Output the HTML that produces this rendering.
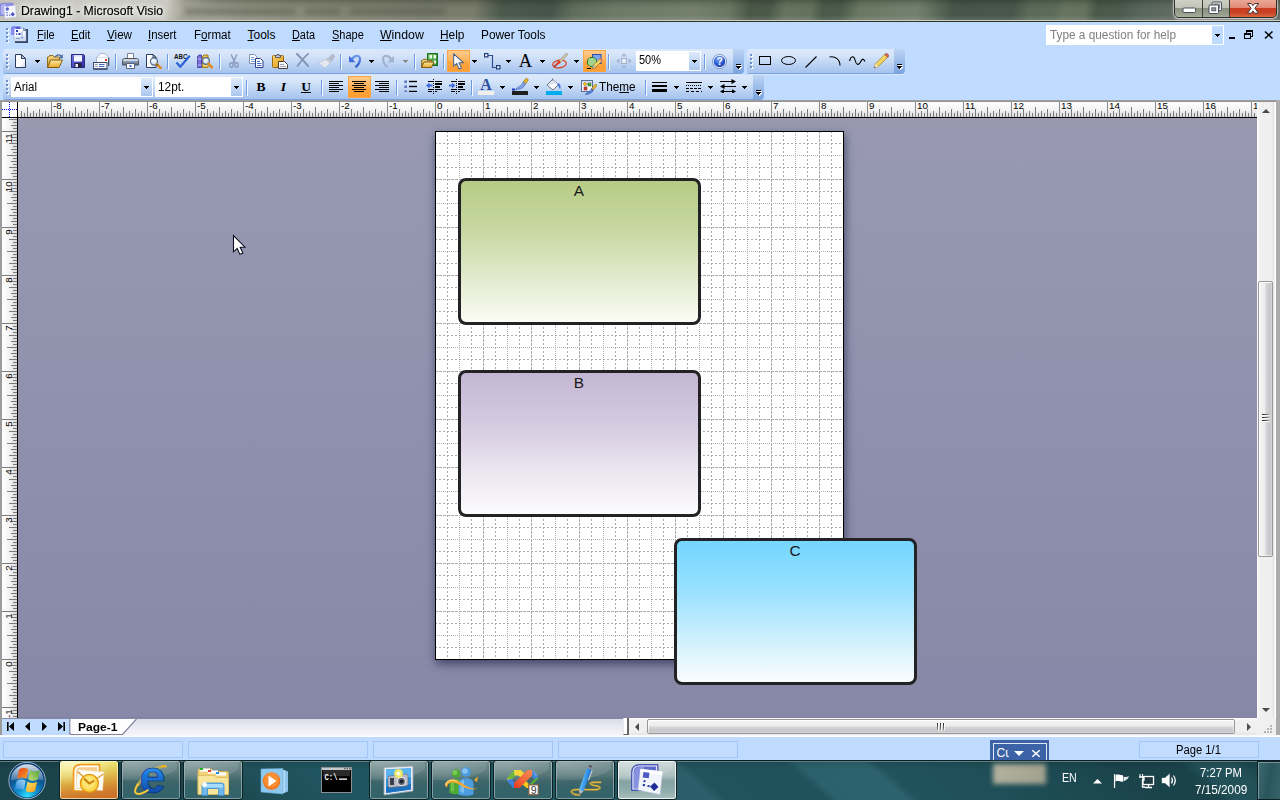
<!DOCTYPE html>
<html><head><meta charset="utf-8"><title>Drawing1 - Microsoft Visio</title>
<style>
html,body{margin:0;padding:0;width:1280px;height:800px;overflow:hidden;background:#bfdbff;font-family:"Liberation Sans",sans-serif;font-size:12px;color:#000}
div,span,svg{position:absolute;box-sizing:border-box}
.t{white-space:nowrap;line-height:1}
#title{left:0;top:0;width:1280px;height:22px;background:#4a5a4c;overflow:hidden}
#menubar{left:0;top:22px;width:1280px;height:26px;background:#bfdbff}
.tb{height:25px;border-radius:3px 0 0 3px;background:linear-gradient(#dbe9fb 0%,#cfe0f8 35%,#b9d2f3 70%,#a9c6ee 100%);border-bottom:1px solid #86a9dc}
.cap{height:25px;width:10px;border-radius:0 4px 4px 0;background:linear-gradient(#b3ccef,#7fa5dd)}
.sep{width:1px;height:17px;background:#7f9fd0;box-shadow:1px 0 0 #eef5ff}
.hl{background:linear-gradient(#fdc27a,#fba443 50%,#fb9a2c);border:1px solid #f29536}
.dd{width:0;height:0;border-left:3px solid transparent;border-right:3px solid transparent;border-top:3px solid #000}
#canvas{left:18px;top:118px;width:1239px;height:600px;background:linear-gradient(#9899b1,#8788a7);overflow:hidden}
.shape{border:3px solid #232325;border-radius:8px}
.shape .t{left:-0.5px;width:100%;text-align:center;top:1.5px;font-size:15.4px;color:#1a1a1a}
#taskbar{left:0;top:760px;width:1280px;height:40px;background:#1f484e;overflow:hidden}
.tbtn{top:1px;width:58px;height:39px;border-radius:3px;border:1px solid #0f2a2e;box-shadow:inset 0 0 0 1px rgba(255,255,255,.32);background:linear-gradient(rgba(255,255,255,.30),rgba(255,255,255,.12) 45%,rgba(255,255,255,.05) 50%,rgba(255,255,255,.10))}
.cell{top:741px;height:17px;border:1px solid #a2c6f6;background:#c2dcff}
</style></head><body>

<div id="title">
<div style="left:0;top:0;width:1280px;height:22px;background:linear-gradient(100deg,#c2c2ba 0,#cbcbc3 40px,#c9c9c1 165px,#a5a597 182px,#8f9180 245px,#828471 330px,#777a6a 420px,#7a7c6a 468px,#4b5a4c 495px,#44544a 545px,#5e6c5a 565px,#6c7a66 605px,#74806c 685px,#6a7762 720px,#4a5848 740px,#4c5a4a 760px,#66745f 775px,#64725d 800px,#4a5a4a 812px,#4c5c4c 830px,#6a7862 848px,#74806e 905px,#5a6a58 925px,#46564a 940px,#47574b 1000px,#5a6a58 1015px,#5c6c5a 1040px,#67755f 1050px,#65735e 1070px,#495949 1082px,#4b5b4d 1105px,#57665b 1125px,#686e63 1175px,#5a6258 1280px)"></div>
<div style="left:170px;top:0;width:1110px;height:22px;background:linear-gradient(rgba(20,30,20,.28) 0,rgba(20,30,20,.10) 4px,rgba(0,0,0,0) 8px,rgba(0,0,0,0) 15px,rgba(255,255,255,.10) 19px);-webkit-mask-image:linear-gradient(90deg,transparent,#000 50px);mask-image:linear-gradient(90deg,transparent,#000 50px)"></div>
<div style="left:185px;top:8px;width:110px;height:7px;background:#4e5246;filter:blur(2.500px);opacity:.4"></div>
<div style="left:305px;top:8px;width:35px;height:7px;background:#4e5246;filter:blur(2.500px);opacity:.36"></div>
<div style="left:350px;top:8px;width:95px;height:7px;background:#4e5246;filter:blur(2.500px);opacity:.36"></div>
<div style="left:0;top:20px;width:1280px;height:1px;background:#c9cdc4"></div>
<div style="left:0;top:21px;width:1280px;height:1px;background:#2c332d"></div>

<div class="t" id="t1" style="left:21px;top:4px;font-size:13px;color:#000;transform-origin:0 0;transform:scaleX(0.9419);-webkit-text-stroke:.15px #000;text-shadow:0 0 5px #fff,0 0 8px #fff,0 0 10px rgba(255,255,255,.8);">Drawing1 - Microsoft Visio</div>
<svg style="left:0px;top:2px" width="17" height="17" viewBox="0 0 17 17" ><path d="M0 4q0-2.800 3-2.800h10v12.300h-13z" fill="#8a8ee6" stroke="#7478d8" stroke-width=".6"/>
<path d="M.8 4.500q0-2.300 2.500-2.300h2.700v10.300h-5.200z" fill="#b8bbf2" opacity=".85"/>
<path d="M4 4.800l11.300-1.300 1 11.500-11.300 1.300z" fill="#f6f7fd" stroke="#c9cce8" stroke-width=".5"/>
<circle cx="7.300" cy="7" r="1.700" fill="#5a60cc"/><rect x="6.300" y="10" width="1.300" height="1.300" fill="#5a60cc"/><rect x="6.500" y="12.500" width="1.300" height="1.300" fill="#5a60cc"/><rect x="9" y="12.500" width="1.300" height="1.300" fill="#5a60cc"/>
<path d="M12.700 10l2.100 2.300-2.100 2.300-2.100-2.300z" fill="#4a50c4"/></svg><div style="left:1174px;top:-4px;width:103px;height:22px;border-radius:5px;border:1px solid #2b302a;box-shadow:0 0 0 1px rgba(255,255,255,.45),0 1px 3px 1px rgba(255,255,255,.28);overflow:hidden">
<div style="left:0;top:0;width:27px;height:21px;background:linear-gradient(#d4d5cc 0,#c2c4b8 52%,#8e9383 54%,#9ea392 85%,#b6baaa 100%)"></div>
<div style="left:27px;top:0;width:1px;height:21px;background:#3a3f38"></div>
<div style="left:28px;top:0;width:1px;height:21px;background:#d8dad0"></div>
<div style="left:28px;top:0;width:26px;height:21px;background:linear-gradient(#d0d1c8 0,#bec0b4 52%,#8a8f80 54%,#9a9f8e 85%,#b2b6a6 100%)"></div>
<div style="left:54px;top:0;width:1px;height:21px;background:#3a3f38"></div>
<div style="left:55px;top:0;width:47px;height:21px;background:linear-gradient(#f0b2a2 0,#e08c78 50%,#cb3d20 54%,#c84224 75%,#de7048 100%)"></div>
</div><svg style="left:1182px;top:7px" width="15" height="7" viewBox="0 0 15 7" ><rect x="1" y="1" width="12.500" height="4.500" rx="1" fill="#fff" stroke="#4a4e5e" stroke-width="1"/></svg><svg style="left:1208px;top:1px" width="15" height="14" viewBox="0 0 15 14" ><rect x="4" y="1" width="9.500" height="8.500" rx="1" fill="#e8e8e4" stroke="#4a4e5e"/><rect x="6" y="3" width="5.500" height="4.500" fill="#a9ab9f" stroke="#4a4e5e" stroke-width=".6"/><rect x="1" y="4" width="9.500" height="8.500" rx="1" fill="#fff" stroke="#4a4e5e"/><rect x="3.800" y="6.800" width="4" height="3" fill="#9a9c90" stroke="#4a4e5e" stroke-width=".8"/></svg><svg style="left:1246px;top:2px" width="14" height="13" viewBox="0 0 14 13" ><path d="M1.500 1.500h3.800l1.700 2.200 1.700-2.200h3.800l-3.600 4.800 3.600 4.900h-3.800l-1.700-2.300-1.700 2.300h-3.800l3.600-4.900z" fill="#fff" stroke="#4a3436" stroke-width="1" stroke-linejoin="round"/></svg>
</div>
<div id="menubar">
<div class="t" id="t2" style="left:37px;top:7px;font-size:12px;color:#000;transform-origin:0 0;transform:scaleX(0.9143);"><u>F</u>ile</div>
<div class="t" id="t3" style="left:71.1px;top:7px;font-size:12px;color:#000;transform-origin:0 0;transform:scaleX(0.9419);"><u>E</u>dit</div>
<div class="t" id="t4" style="left:107px;top:7px;font-size:12px;color:#000;transform-origin:0 0;transform:scaleX(0.9685);"><u>V</u>iew</div>
<div class="t" id="t5" style="left:148.1px;top:7px;font-size:12px;color:#000;transform-origin:0 0;transform:scaleX(0.9490);"><u>I</u>nsert</div>
<div class="t" id="t6" style="left:193.7px;top:7px;font-size:12px;color:#000;transform-origin:0 0;transform:scaleX(0.9676);">F<u>o</u>rmat</div>
<div class="t" id="t7" style="left:247.5px;top:7px;font-size:12px;color:#000;"><u>T</u>ools</div>
<div class="t" id="t8" style="left:292px;top:7px;font-size:12px;color:#000;transform-origin:0 0;transform:scaleX(0.9070);"><u>D</u>ata</div>
<div class="t" id="t9" style="left:332px;top:7px;font-size:12px;color:#000;transform-origin:0 0;transform:scaleX(0.9159);"><u>S</u>hape</div>
<div class="t" id="t10" style="left:380px;top:7px;font-size:12px;color:#000;transform-origin:0 0;transform:scaleX(1.0261);"><u>W</u>indow</div>
<div class="t" id="t11" style="left:440px;top:7px;font-size:12px;color:#000;transform-origin:0 0;transform:scaleX(0.9924);"><u>H</u>elp</div>
<div class="t" id="t12" style="left:481.2px;top:7px;font-size:12px;color:#000;transform-origin:0 0;transform:scaleX(0.9899);">Power Tools</div>
</div>
<div style="left:7px;top:29px;width:2px;height:2px;background:#fff"></div><div style="left:6px;top:28px;width:2px;height:2px;background:#6c8ecb"></div><div style="left:7px;top:33px;width:2px;height:2px;background:#fff"></div><div style="left:6px;top:32px;width:2px;height:2px;background:#6c8ecb"></div><div style="left:7px;top:37px;width:2px;height:2px;background:#fff"></div><div style="left:6px;top:36px;width:2px;height:2px;background:#6c8ecb"></div><div style="left:7px;top:41px;width:2px;height:2px;background:#fff"></div><div style="left:6px;top:40px;width:2px;height:2px;background:#6c8ecb"></div>
<svg style="left:11px;top:26px" width="17" height="17" viewBox="0 0 17 17" ><rect x="4" y="3" width="13" height="14" fill="#34486a"/>
<path d="M3 2h9.500l2.500 2.500v10.500h-12z" fill="#f4f7fd" stroke="#8aa0c8" stroke-width=".6"/>
<path d="M12.500 2v2.500h2.500z" fill="#c6d2ea" stroke="#4a5e86" stroke-width=".6"/>
<rect x="4" y="10.500" width="10" height="4" fill="#cfdcf4"/>
<path d="M0 2q0-1.500 2-1.500h7.500v8.500h-9.500z" fill="#5a5cd0"/><path d="M0 2q0-1.500 2-1.500h3v8.500h-5z" fill="#8a8cec"/>
<path d="M3.500 3h6.500v7.500h-6.500z" fill="#fbfcff"/>
<rect x="5" y="4" width="2" height="2" fill="#2a3cb8"/><rect x="5" y="7.500" width="1.300" height="1.300" fill="#2a3cb8"/><rect x="7.500" y="7" width="2" height="2" fill="#2a3cb8"/>
<path d="M10.500 5.500v5.500l-1.500 0 2 2 2-2h-1.500v-5.500z" fill="#7f9ad0" opacity=".8"/>
<path d="M5.500 12.500h1M7.500 12.500h1" stroke="#4a5e86"/></svg><div style="left:1046px;top:25px;width:178px;height:20px;background:#fff"></div><div style="left:1212px;top:26px;width:11px;height:18px;background:#bfdbff"></div><svg style="left:1215px;top:34px" width="5" height="3" viewBox="0 0 5 3" shape-rendering="crispEdges"><path d="M0 0h5l-2.500 3z" fill="#000"/></svg><div class="t" id="t13" style="left:1050px;top:29px;font-size:12px;color:#808080;transform-origin:0 0;transform:scaleX(0.9837);">Type a question for help</div><div style="left:1229px;top:37px;width:6px;height:2px;background:#000"></div><svg style="left:1244px;top:30px" width="10" height="10" viewBox="0 0 10 10" shape-rendering="crispEdges"><path d="M2.500 0.500h6v5.500h-2M2.500 2.500v-2" fill="none" stroke="#000"/><rect x="2" y="0" width="7" height="2" fill="#000"/><rect x=".5" y="3.500" width="6" height="5" fill="none" stroke="#000"/><rect x="0" y="3" width="7" height="2" fill="#000"/></svg><svg style="left:1264px;top:30px" width="10" height="10" viewBox="0 0 10 10" ><path d="M1 1.500l7.500 7M8.500 1.500l-7.500 7" stroke="#000" stroke-width="1.500"/></svg>
<svg width="0" height="0" style="left:0;top:0"><defs>
<linearGradient id="gPage" x1="0" y1="0" x2="1" y2="1"><stop offset="0" stop-color="#fff"/><stop offset=".6" stop-color="#fdfdff"/><stop offset="1" stop-color="#cfd8e8"/></linearGradient>
<linearGradient id="gFold" x1="0" y1="0" x2="0" y2="1"><stop offset="0" stop-color="#fdeaa6"/><stop offset="1" stop-color="#e9a825"/></linearGradient>
<linearGradient id="gFoldB" x1="0" y1="0" x2="0" y2="1"><stop offset="0" stop-color="#f6d683"/><stop offset="1" stop-color="#d9a030"/></linearGradient>
<linearGradient id="gSave" x1="0" y1="0" x2="1" y2="1"><stop offset="0" stop-color="#7a78e6"/><stop offset=".5" stop-color="#4c4ac4"/><stop offset="1" stop-color="#2e2c8c"/></linearGradient>
<linearGradient id="gPrn" x1="0" y1="0" x2="0" y2="1"><stop offset="0" stop-color="#c9ced8"/><stop offset=".5" stop-color="#8e96a6"/><stop offset="1" stop-color="#5f6777"/></linearGradient>
<radialGradient id="gLens" cx=".4" cy=".35" r=".7"><stop offset="0" stop-color="#fff"/><stop offset="1" stop-color="#a9cdee"/></radialGradient>
<linearGradient id="gClip" x1="0" y1="0" x2="1" y2="1"><stop offset="0" stop-color="#fbd566"/><stop offset="1" stop-color="#dd9414"/></linearGradient>
<linearGradient id="gUndo" x1="0" y1="0" x2="0" y2="1"><stop offset="0" stop-color="#6f9cec"/><stop offset="1" stop-color="#2a56c0"/></linearGradient>
<linearGradient id="gGreen" x1="0" y1="0" x2="1" y2="1"><stop offset="0" stop-color="#6cc060"/><stop offset="1" stop-color="#2c8a2c"/></linearGradient>
<radialGradient id="gHelp" cx=".4" cy=".3" r=".8"><stop offset="0" stop-color="#7ea4f4"/><stop offset=".5" stop-color="#2f5fd8"/><stop offset="1" stop-color="#143a9c"/></radialGradient>
<linearGradient id="gPencil" x1="0" y1="0" x2="1" y2="1"><stop offset="0" stop-color="#fff2a0"/><stop offset="1" stop-color="#e8b820"/></linearGradient>
<linearGradient id="gHl" x1="0" y1="0" x2="0" y2="1"><stop offset="0" stop-color="#fece92"/><stop offset=".45" stop-color="#fdb45c"/><stop offset="1" stop-color="#fb9f36"/></linearGradient>
<radialGradient id="gOrb" cx=".5" cy=".95" r=".95"><stop offset="0" stop-color="#35e0ff"/><stop offset=".25" stop-color="#119ad6"/><stop offset=".6" stop-color="#0c5a98"/><stop offset="1" stop-color="#0b3f74"/></radialGradient>
<linearGradient id="gOrbTop" x1="0" y1="0" x2="0" y2="1"><stop offset="0" stop-color="#fff" stop-opacity=".85"/><stop offset="1" stop-color="#fff" stop-opacity=".2"/></linearGradient>
<radialGradient id="gBall" cx=".35" cy=".3" r=".8"><stop offset="0" stop-color="#9ab6ee"/><stop offset="1" stop-color="#1c3c94"/></radialGradient>
<linearGradient id="gFr" x1="0" y1="0" x2="1" y2="1"><stop offset="0" stop-color="#e8401c"/><stop offset="1" stop-color="#f8a020"/></linearGradient>
<linearGradient id="gFg" x1="0" y1="1" x2="1" y2="0"><stop offset="0" stop-color="#c8e088"/><stop offset="1" stop-color="#4ca428"/></linearGradient>
<linearGradient id="gFb" x1="0" y1="1" x2="1" y2="0"><stop offset="0" stop-color="#1c84d8"/><stop offset="1" stop-color="#a8d8f8"/></linearGradient>
<linearGradient id="gFy" x1="0" y1="0" x2="1" y2="1"><stop offset="0" stop-color="#fce46c"/><stop offset="1" stop-color="#f89c14"/></linearGradient>
</defs></svg>
<div style="left:3px;top:49px;width:730px;height:25px;border-radius:3px 0 0 3px;background:linear-gradient(#dce9fb 0%,#d3e3f9 30%,#c3d8f5 55%,#b1cbf1 80%,#a6c4ee 100%);border-bottom:1px solid #7ba2e0"></div>
<div style="left:5px;top:74px;width:738px;height:1px;background:#d9e7fb"></div>
<div style="left:733px;top:49px;width:11px;height:25px;border-radius:0 4px 4px 0;background:linear-gradient(#bdd4f3,#9cbdea 50%,#7aa2de)"></div><svg style="left:736px;top:64px" width="7" height="6" viewBox="0 0 7 6" shape-rendering="crispEdges"><path d="M1 1h5v1h-5z M1 3h5l-2.5 3z" fill="#fff"/><path d="M0 0h5v1h-5z M0 2h5l-2.5 3z" fill="#000"/></svg>
<div style="left:7px;top:55px;width:2px;height:2px;background:#fff"></div><div style="left:6px;top:54px;width:2px;height:2px;background:#6c8ecb"></div><div style="left:7px;top:59px;width:2px;height:2px;background:#fff"></div><div style="left:6px;top:58px;width:2px;height:2px;background:#6c8ecb"></div><div style="left:7px;top:63px;width:2px;height:2px;background:#fff"></div><div style="left:6px;top:62px;width:2px;height:2px;background:#6c8ecb"></div><div style="left:7px;top:67px;width:2px;height:2px;background:#fff"></div><div style="left:6px;top:66px;width:2px;height:2px;background:#6c8ecb"></div>
<div style="left:747px;top:49px;width:147px;height:25px;border-radius:3px 0 0 3px;background:linear-gradient(#dce9fb 0%,#d3e3f9 30%,#c3d8f5 55%,#b1cbf1 80%,#a6c4ee 100%);border-bottom:1px solid #7ba2e0"></div>
<div style="left:749px;top:74px;width:155px;height:1px;background:#d9e7fb"></div>
<div style="left:894px;top:49px;width:11px;height:25px;border-radius:0 4px 4px 0;background:linear-gradient(#bdd4f3,#9cbdea 50%,#7aa2de)"></div><svg style="left:897px;top:64px" width="7" height="6" viewBox="0 0 7 6" shape-rendering="crispEdges"><path d="M1 1h5v1h-5z M1 3h5l-2.5 3z" fill="#fff"/><path d="M0 0h5v1h-5z M0 2h5l-2.5 3z" fill="#000"/></svg>
<div style="left:751px;top:55px;width:2px;height:2px;background:#fff"></div><div style="left:750px;top:54px;width:2px;height:2px;background:#6c8ecb"></div><div style="left:751px;top:59px;width:2px;height:2px;background:#fff"></div><div style="left:750px;top:58px;width:2px;height:2px;background:#6c8ecb"></div><div style="left:751px;top:63px;width:2px;height:2px;background:#fff"></div><div style="left:750px;top:62px;width:2px;height:2px;background:#6c8ecb"></div><div style="left:751px;top:67px;width:2px;height:2px;background:#fff"></div><div style="left:750px;top:66px;width:2px;height:2px;background:#6c8ecb"></div>
<div style="left:3px;top:75px;width:750px;height:25px;border-radius:3px 0 0 3px;background:linear-gradient(#dce9fb 0%,#d3e3f9 30%,#c3d8f5 55%,#b1cbf1 80%,#a6c4ee 100%);border-bottom:1px solid #7ba2e0"></div>
<div style="left:5px;top:100px;width:758px;height:1px;background:#d9e7fb"></div>
<div style="left:753px;top:75px;width:11px;height:25px;border-radius:0 4px 4px 0;background:linear-gradient(#bdd4f3,#9cbdea 50%,#7aa2de)"></div><svg style="left:756px;top:90px" width="7" height="6" viewBox="0 0 7 6" shape-rendering="crispEdges"><path d="M1 1h5v1h-5z M1 3h5l-2.5 3z" fill="#fff"/><path d="M0 0h5v1h-5z M0 2h5l-2.5 3z" fill="#000"/></svg>
<div style="left:7px;top:81px;width:2px;height:2px;background:#fff"></div><div style="left:6px;top:80px;width:2px;height:2px;background:#6c8ecb"></div><div style="left:7px;top:85px;width:2px;height:2px;background:#fff"></div><div style="left:6px;top:84px;width:2px;height:2px;background:#6c8ecb"></div><div style="left:7px;top:89px;width:2px;height:2px;background:#fff"></div><div style="left:6px;top:88px;width:2px;height:2px;background:#6c8ecb"></div><div style="left:7px;top:93px;width:2px;height:2px;background:#fff"></div><div style="left:6px;top:92px;width:2px;height:2px;background:#6c8ecb"></div>
<svg style="left:15px;top:54px" width="11" height="14" viewBox="0 0 11 14" ><path d="M.5 .5h6l4 4v9h-10z" fill="url(#gPage)" stroke="#2c3d60"/><path d="M6.5 .5v4h4z" fill="#b8c6de" stroke="#2c3d60" stroke-linejoin="round"/></svg>
<svg style="left:47px;top:54px" width="16" height="14" viewBox="0 0 16 14" ><path d="M.5 13.5v-10.5h1.2l.8-1.5h3.5l1 1.5h5.5v3" fill="url(#gFoldB)" stroke="#8f6c1e"/><path d="M.5 13.5l3-7.5h12l-3.5 7.5z" fill="url(#gFold)" stroke="#7d5a12" stroke-linejoin="round"/><path d="M8.2 2.8c1.5-2.4 4.6-2.6 6.2-.6" fill="none" stroke="#46659a" stroke-width="1.3"/><path d="M15.8 .3v4h-4z" fill="#46659a"/></svg>
<svg style="left:71px;top:54px" width="14" height="14" viewBox="0 0 14 14" ><path d="M.5 .5h12l1 1v12h-13z" fill="url(#gSave)" stroke="#2c2a86"/><rect x="3" y="1" width="8" height="6.5" fill="#f4f6ff"/><rect x="3" y="1" width="8" height="1.5" fill="#d6daf2"/><rect x="3.5" y="9" width="7" height="4.5" fill="#23233c"/><rect x="4.5" y="10" width="2.5" height="3" fill="#f0f0f8"/></svg>
<svg style="left:93px;top:53px" width="17" height="17" viewBox="0 0 17 17" ><path d="M3.500 4.500l4-4h4.500l4 4v8.500h-12.500z" fill="#fbfcff" stroke="#9aa8c0" stroke-width=".8"/><path d="M3.500 4.500h12.500" stroke="#c6d0e2" stroke-width=".7"/><path d="M15.600 4.800v8" stroke="#3a4a6a" stroke-width="1.100"/><rect x="12" y="6" width="2" height="2" fill="#e03a1c"/><rect x=".5" y="9.500" width="13.500" height="6.500" fill="#f6f8fd" stroke="#3a4a66" stroke-width="1"/><path d="M.5 16h13.800" stroke="#2a3a54" stroke-width="1.200"/><path d="M2 11.500h2.500M2 13.500h2.500" stroke="#8e98aa" stroke-width="1"/><path d="M6 11.500h5.500M6 13.500h5.500" stroke="#4a6cc0" stroke-width="1"/></svg>
<svg style="left:122px;top:53px" width="17" height="16" viewBox="0 0 17 16" ><path d="M5.500 .5h6v5.500h-6z" fill="#fff" stroke="#7c8496"/><path d="M.5 7.500q0-2 2-2h12q2 0 2 2v4.500h-16z" fill="url(#gPrn)" stroke="#4c5362"/><rect x="1" y="6.500" width="15" height="1.500" fill="#dfe3ea" opacity=".8"/><rect x="9" y="8" width="3.500" height="1.500" fill="#5aa0ee"/><path d="M4.500 10.500h8v5h-8z" fill="#fff" stroke="#59617a"/><rect x="7.500" y="12" width="2" height="2" fill="#3a6ee0"/></svg>
<svg style="left:146px;top:54px" width="16" height="15" viewBox="0 0 16 15" ><path d="M.5 .5h6.500l3 3v10h-9.500z" fill="url(#gPage)" stroke="#2c3d60"/><path d="M7 .5v3h3z" fill="#b8c6de" stroke="#2c3d60" stroke-linejoin="round"/><circle cx="8" cy="7.500" r="3.600" fill="url(#gLens)" stroke="#5b6b86" stroke-width="1.200"/><path d="M10.800 10.300l3.800 3.600" stroke="#e08a1c" stroke-width="2.600" stroke-linecap="round"/><path d="M10.500 10l1.300 1.300" stroke="#7a5a20" stroke-width="1.500"/></svg>
<svg style="left:174px;top:53px" width="17" height="15" viewBox="0 0 17 15" ><text x="0" y="5.600" font-family="Liberation Sans" font-weight="bold" font-size="6.800" fill="#111" textLength="13.500" lengthAdjust="spacingAndGlyphs">ABC</text><path d="M2.500 9.500l3.800 4.200 9.500-11" fill="none" stroke="#2f62d6" stroke-width="2.300" stroke-linejoin="miter"/></svg>
<svg style="left:197px;top:54px" width="16" height="15" viewBox="0 0 16 15" ><path d="M.5 2.500l1.500-1.500h2.500v12.500h-4z" fill="#7a70d6" stroke="#5048a8"/><path d="M.5 5h4M.5 11h4" stroke="#b9b4f0"/><path d="M5.500 2.500l1.500-1.500h4v12.500h-5.500z" fill="#e9c04a" stroke="#a07c1c"/><path d="M5.500 5h5.500M5.500 11h5.500" stroke="#f8e6a0"/><circle cx="9" cy="7" r="3.400" fill="url(#gLens)" stroke="#5b6b86" stroke-width="1.200"/><path d="M11.600 9.800l3.300 3.600" stroke="#e08a1c" stroke-width="2.600" stroke-linecap="round"/></svg>
<svg style="left:229px;top:54px" width="10" height="14" viewBox="0 0 10 14" ><path d="M2.200 .5l3.800 8.500M7.800 .5l-3.800 8.500" stroke="#8a9cbd" stroke-width="1.500" fill="none"/><ellipse cx="2.400" cy="11" rx="1.700" ry="2.300" fill="none" stroke="#8a9cbd" stroke-width="1.400"/><ellipse cx="7.600" cy="11" rx="1.700" ry="2.300" fill="none" stroke="#8a9cbd" stroke-width="1.400"/></svg>
<svg style="left:249px;top:54px" width="15" height="14" viewBox="0 0 15 14" ><path d="M.5 .5h5l2.500 2.500v6.500h-7.500z" fill="#fff" stroke="#8292b4"/><path d="M2 3.500h3M2 5.500h4.500M2 7.500h4.500" stroke="#6f96dc"/><path d="M6.500 4.500h5l2.500 2.500v6.500h-7.500z" fill="#fff" stroke="#2a3f86"/><path d="M8 7.500h3M8 9.500h4.500M8 11.500h4.500" stroke="#3f6fd2"/></svg>
<svg style="left:272px;top:54px" width="16" height="15" viewBox="0 0 16 15" ><rect x=".5" y="1.500" width="11" height="12" rx="1" fill="url(#gClip)" stroke="#9a6a10"/><path d="M3.500 3.500v-2h1.500v-1h2v1h1.500v2z" fill="#c9ccd6" stroke="#5e5e6e"/><path d="M6.500 7.500h6l3 3v4h-9z" fill="#f7f8fb" stroke="#4a4038"/><path d="M8 10.500h4M8 12.500h6" stroke="#9aa2b2"/></svg>
<svg style="left:296px;top:53px" width="13" height="14" viewBox="0 0 13 14" ><path d="M1 1c3 3 7 7 11 12" stroke="#8493b2" stroke-width="2" fill="none" stroke-linecap="round"/><path d="M12 .8c-3.500 3-7.500 7.500-10.500 12.200" stroke="#8493b2" stroke-width="1.700" fill="none" stroke-linecap="round"/></svg>
<svg style="left:318px;top:54px" width="17" height="15" viewBox="0 0 17 15" ><path d="M12 2.500l3-2.300 1.800 2.200-3.300 4.600-3-2.400z" fill="#b4bccb" stroke="#9ea8ba" stroke-width=".6"/><path d="M9 4l4.500 3.600-1.500 1.800-4.500-3.600z" fill="#cdd3de" stroke="#aab3c4" stroke-width=".5"/><path d="M7.800 5.500l4.200 3.700-5 4.800-6.500-5z" fill="#e8ecf3" stroke="#b8c0ce" stroke-width=".7"/><path d="M3 9l3.500 3M5 8l3.500 3" stroke="#cfd5e0" stroke-width=".6"/></svg>
<svg style="left:348px;top:54px" width="14" height="14" viewBox="0 0 14 14" ><path d="M3.800 5.300C5.500 2.500 8 1.700 9.800 1.900c2.200.4 2.500 3.100 1.800 5.400-.6 2.100-1.800 3.900-3.400 5.200" fill="none" stroke="url(#gUndo)" stroke-width="2.300" stroke-linecap="round"/><path d="M1 1.800v6.400h6.600z" fill="#3f6fdc"/><path d="M8.600 11.500l-1.200 1.600 1.300-.3z" fill="#5a86e4"/></svg>
<svg style="left:381px;top:54px" width="14" height="14" viewBox="0 0 14 14" ><g transform="translate(14 0) scale(-1 1)"><path d="M3.800 5.300C5.500 2.500 8 1.700 9.800 1.900c2.200.4 2.500 3.100 1.800 5.400-.6 2.100-1.800 3.900-3.400 5.200" fill="none" stroke="#a3b3cd" stroke-width="2.300" stroke-linecap="round"/><path d="M1 1.800v6.400h6.600z" fill="#a3b3cd"/></g></svg>
<svg style="left:421px;top:53px" width="17" height="15" viewBox="0 0 17 15" ><rect x="6.500" y=".5" width="10" height="12" fill="url(#gGreen)" stroke="#1e6e24"/><rect x="8.500" y="2" width="2.500" height="3.500" fill="#f2fbe9"/><rect x="12.500" y="2" width="2.500" height="3.500" fill="#f2fbe9"/><rect x="12.500" y="7.500" width="2.500" height="3" fill="#f2fbe9"/><path d="M.5 14.500v-7h1l.8-1.200h3.200l.8 1.200h4.200v2" fill="url(#gFoldB)" stroke="#8f6c1e"/><path d="M.5 14.500l2.500-5.500h10l-2.500 5.500z" fill="url(#gFold)" stroke="#7d5a12" stroke-linejoin="round"/></svg>
<div style="left:115px;top:54px;width:1px;height:15px;background:#6d9de0"></div><div style="left:116px;top:55px;width:1px;height:15px;background:#f4f9ff"></div>
<div style="left:167px;top:54px;width:1px;height:15px;background:#6d9de0"></div><div style="left:168px;top:55px;width:1px;height:15px;background:#f4f9ff"></div>
<div style="left:219px;top:54px;width:1px;height:15px;background:#6d9de0"></div><div style="left:220px;top:55px;width:1px;height:15px;background:#f4f9ff"></div>
<div style="left:340px;top:54px;width:1px;height:15px;background:#6d9de0"></div><div style="left:341px;top:55px;width:1px;height:15px;background:#f4f9ff"></div>
<div style="left:414px;top:54px;width:1px;height:15px;background:#6d9de0"></div><div style="left:415px;top:55px;width:1px;height:15px;background:#f4f9ff"></div>
<div style="left:443px;top:54px;width:1px;height:15px;background:#6d9de0"></div><div style="left:444px;top:55px;width:1px;height:15px;background:#f4f9ff"></div>
<div style="left:608px;top:54px;width:1px;height:15px;background:#6d9de0"></div><div style="left:609px;top:55px;width:1px;height:15px;background:#f4f9ff"></div>
<div style="left:704px;top:54px;width:1px;height:15px;background:#6d9de0"></div><div style="left:705px;top:55px;width:1px;height:15px;background:#f4f9ff"></div>
<svg style="left:35px;top:60px" width="5" height="3" viewBox="0 0 5 3" shape-rendering="crispEdges"><path d="M0 0h5l-2.5 3z" fill="#000"/></svg>
<svg style="left:369px;top:60px" width="5" height="3" viewBox="0 0 5 3" shape-rendering="crispEdges"><path d="M0 0h5l-2.5 3z" fill="#000"/></svg>
<svg style="left:403px;top:60px" width="5" height="3" viewBox="0 0 5 3" shape-rendering="crispEdges"><path d="M0 0h5l-2.5 3z" fill="#8a8a8a"/></svg>
<div style="left:447px;top:50px;width:23px;height:22px;background:linear-gradient(#fecb8c,#fdb560 45%,#fba53f 55%,#fb9e33);border:1px solid #f9a548"></div>
<svg style="left:453px;top:53px" width="11" height="17" viewBox="0 0 11 17" ><path d="M.7 .8v12.400l3-2.800 2.300 5.500 2.300-1-2.300-5.200h4.300z" fill="#fff" stroke="#46618e" stroke-width="1.100" stroke-linejoin="round"/><path d="M1.600 3v8l2.400-2.200" fill="none" stroke="#dfe6f2" stroke-width=".8"/></svg>
<svg style="left:472px;top:60px" width="5" height="3" viewBox="0 0 5 3" shape-rendering="crispEdges"><path d="M0 0h5l-2.5 3z" fill="#000"/></svg>
<svg style="left:484px;top:53px" width="17" height="17" viewBox="0 0 17 17" ><path d="M4 2.500h4.500v12h4" fill="none" stroke="#30518f" stroke-width="1.200"/><rect x=".6" y=".6" width="3.300" height="3.300" fill="#fff" stroke="#1f3c78" stroke-width="1.200"/><rect x="12.600" y="12.600" width="3.300" height="3.300" fill="#fff" stroke="#1f3c78" stroke-width="1.200"/></svg>
<svg style="left:506px;top:60px" width="5" height="3" viewBox="0 0 5 3" shape-rendering="crispEdges"><path d="M0 0h5l-2.5 3z" fill="#000"/></svg>
<svg style="left:518px;top:54px" width="15" height="14" viewBox="0 0 15 14" ><text x="7.500" y="12.600" text-anchor="middle" font-family="Liberation Serif" font-size="18.500" fill="#000">A</text></svg>
<svg style="left:540px;top:60px" width="5" height="3" viewBox="0 0 5 3" shape-rendering="crispEdges"><path d="M0 0h5l-2.5 3z" fill="#000"/></svg>
<svg style="left:552px;top:53px" width="17" height="16" viewBox="0 0 17 16" ><ellipse cx="7.500" cy="11" rx="6.800" ry="3.800" fill="none" stroke="#d84a2a" stroke-width="1.300" transform="rotate(-8 7.500 11)"/><path d="M15.800 1.300l-1.600-1.100-8.200 8.800 1.700 1.400z" fill="#d9c9a6" stroke="#8f8672" stroke-width=".7"/><path d="M7 7.500l-4 4.300 1.200 1.200 4.600-3.800z" fill="#e2381e"/><path d="M3 11.800l-1.300 2.600 2.500-1.400z" fill="#7a1a10"/></svg>
<svg style="left:574px;top:60px" width="5" height="3" viewBox="0 0 5 3" shape-rendering="crispEdges"><path d="M0 0h5l-2.5 3z" fill="#000"/></svg>
<div style="left:583px;top:50px;width:23px;height:22px;background:linear-gradient(#fecb8c,#fdb560 45%,#fba53f 55%,#fb9e33);border:1px solid #f9a548"></div>
<svg style="left:587px;top:54px" width="16" height="15" viewBox="0 0 16 15" ><rect x="5.500" y=".5" width="8.500" height="9" fill="#7ba4ee" stroke="#2c4ca8"/><path d="M3 3.500h4l2.500 2.500v4l-2.500 2.500h-4l-2.500-2.500v-4z" fill="#a4d48c" stroke="#2a7a28"/><path d="M13.300 4.200l2.200 2.200-7 7-3 .9.800-3.100z" fill="url(#gPencil)" stroke="#8a6a30" stroke-width=".7"/><path d="M13.300 4.200l2.200 2.200-1.200 1.200-2.200-2.200z" fill="#e87a6a"/><path d="M5.500 14.300l.8-3.100 2.200 2.200z" fill="#fff" stroke="#555" stroke-width=".5"/><path d="M0 14.500h4" stroke="#111" stroke-width="1"/></svg>
<svg style="left:616px;top:53px" width="16" height="16" viewBox="0 0 16 16" ><rect x="5.500" y="5.500" width="5" height="5" fill="#e9eef7" stroke="#9fafc9"/><path d="M8 0l3 3.500h-6zM8 16l3-3.500h-6zM0 8l3.500-3v6zM16 8l-3.500-3v6z" fill="#a9b8d2"/></svg>
<div style="left:636px;top:51px;width:65px;height:20px;background:#fff"></div>
<div style="left:689px;top:52px;width:11px;height:18px;background:linear-gradient(#dfebfc,#c3d8f6 50%,#adc8f0)"></div>
<svg style="left:692px;top:60px" width="5" height="3" viewBox="0 0 5 3" shape-rendering="crispEdges"><path d="M0 0h5l-2.5 3z" fill="#000"/></svg>
<div class="t" id="t14" style="left:639px;top:54px;font-size:12px;color:#000;transform-origin:0 0;transform:scaleX(0.9155);">50%</div>
<svg style="left:712px;top:54px" width="15" height="15" viewBox="0 0 15 15" ><circle cx="7.500" cy="7.500" r="7" fill="#fff" stroke="#5a7ac4" stroke-width=".8"/><circle cx="7.500" cy="7.500" r="5.800" fill="url(#gHelp)"/><text x="7.600" y="11.300" text-anchor="middle" font-family="Liberation Sans" font-weight="bold" font-size="10.500" fill="#fff">?</text></svg>
<svg style="left:759px;top:56px" width="12" height="9" viewBox="0 0 12 9" ><rect x=".5" y=".5" width="11" height="8" fill="none" stroke="#000"/></svg>
<svg style="left:781px;top:56px" width="15" height="9" viewBox="0 0 15 9" ><ellipse cx="7.500" cy="4.500" rx="7" ry="4" fill="none" stroke="#000"/></svg>
<svg style="left:805px;top:56px" width="12" height="12" viewBox="0 0 12 12" ><path d="M.5 11.500l11-11" stroke="#000" stroke-width="1.100"/></svg>
<svg style="left:829px;top:56px" width="12" height="10" viewBox="0 0 12 10" ><path d="M.5 1c6-1 10.500 2.500 10.500 8.500" fill="none" stroke="#000" stroke-width="1.100"/></svg>
<svg style="left:849px;top:56px" width="17" height="9" viewBox="0 0 17 9" ><path d="M.5 5c1.500-5.500 4.500-5.500 5.500-1s3.500 6 5.500 2 3-3.500 4.500-.5" fill="none" stroke="#000" stroke-width="1.100"/></svg>
<svg style="left:873px;top:53px" width="16" height="16" viewBox="0 0 16 16" ><path d="M12 1.200l2.800 2.800-9.800 9.800-3.800 1.200 1.100-3.900z" fill="url(#gPencil)" stroke="#9a7a28" stroke-width=".7"/><path d="M12 1.200q1.500-1.500 3 0t0 3l-.3.200-2.900-2.900z" fill="#d8685a" stroke="#9a3a30" stroke-width=".6"/><path d="M1.200 15l1.100-3.900 2.800 2.800z" fill="#f4e8d0"/><path d="M1.200 15l.5-1.700 1.200 1.200z" fill="#333"/></svg>
<div style="left:11px;top:77px;width:142px;height:20px;background:#fff"></div>
<div style="left:141px;top:78px;width:11px;height:18px;background:linear-gradient(#dfebfc,#c3d8f6 50%,#adc8f0)"></div>
<svg style="left:144px;top:86px" width="5" height="3" viewBox="0 0 5 3" shape-rendering="crispEdges"><path d="M0 0h5l-2.5 3z" fill="#000"/></svg>
<div class="t" id="t15" style="left:14.4px;top:80.5px;font-size:12px;color:#000;transform-origin:0 0;transform:scaleX(0.9577);">Arial</div>
<div style="left:155px;top:77px;width:88px;height:20px;background:#fff"></div>
<div style="left:231px;top:78px;width:11px;height:18px;background:linear-gradient(#dfebfc,#c3d8f6 50%,#adc8f0)"></div>
<svg style="left:234px;top:86px" width="5" height="3" viewBox="0 0 5 3" shape-rendering="crispEdges"><path d="M0 0h5l-2.5 3z" fill="#000"/></svg>
<div class="t" id="t16" style="left:157.6px;top:80.5px;font-size:12px;color:#000;transform-origin:0 0;transform:scaleX(0.9849);">12pt.</div>
<div style="left:246px;top:80px;width:1px;height:15px;background:#6d9de0"></div><div style="left:247px;top:81px;width:1px;height:15px;background:#f4f9ff"></div>
<div style="left:321px;top:80px;width:1px;height:15px;background:#6d9de0"></div><div style="left:322px;top:81px;width:1px;height:15px;background:#f4f9ff"></div>
<div style="left:396px;top:80px;width:1px;height:15px;background:#6d9de0"></div><div style="left:397px;top:81px;width:1px;height:15px;background:#f4f9ff"></div>
<div style="left:471px;top:80px;width:1px;height:15px;background:#6d9de0"></div><div style="left:472px;top:81px;width:1px;height:15px;background:#f4f9ff"></div>
<div style="left:645px;top:80px;width:1px;height:15px;background:#6d9de0"></div><div style="left:646px;top:81px;width:1px;height:15px;background:#f4f9ff"></div>
<svg style="left:256px;top:81px" width="10" height="11" viewBox="0 0 10 11" ><text x="5" y="10.300" text-anchor="middle" font-family="Liberation Serif" font-weight="bold" font-size="13.500" fill="#000">B</text></svg>
<svg style="left:279px;top:81px" width="10" height="11" viewBox="0 0 10 11" ><text x="4.500" y="10.300" text-anchor="middle" font-family="Liberation Serif" font-weight="bold" font-style="italic" font-size="13.500" fill="#000">I</text></svg>
<svg style="left:301px;top:81px" width="10" height="13" viewBox="0 0 10 13" ><text x="5" y="10.300" text-anchor="middle" font-family="Liberation Serif" font-weight="bold" font-size="13.500" fill="#000">U</text><rect x="0" y="11" width="10" height="1" fill="#000" shape-rendering="crispEdges"/></svg>
<svg style="left:329px;top:81px" width="14" height="11" viewBox="0 0 14 11" ><rect x="0" y="0" width="14" height="1" fill="#000"/><rect x="0" y="2" width="10" height="1" fill="#000"/><rect x="0" y="4" width="14" height="1" fill="#000"/><rect x="0" y="6" width="10" height="1" fill="#000"/><rect x="0" y="8" width="14" height="1" fill="#000"/><rect x="0" y="10" width="10" height="1" fill="#000"/></svg>
<div style="left:348px;top:76px;width:23px;height:22px;background:linear-gradient(#fecb8c,#fdb560 45%,#fba53f 55%,#fb9e33);border:1px solid #f9a548"></div>
<svg style="left:352px;top:81px" width="14" height="11" viewBox="0 0 14 11" ><rect x="0" y="0" width="14" height="1" fill="#000"/><rect x="2" y="2" width="10" height="1" fill="#000"/><rect x="0" y="4" width="14" height="1" fill="#000"/><rect x="2" y="6" width="10" height="1" fill="#000"/><rect x="0" y="8" width="14" height="1" fill="#000"/><rect x="2" y="10" width="10" height="1" fill="#000"/></svg>
<svg style="left:375px;top:81px" width="14" height="11" viewBox="0 0 14 11" ><rect x="0" y="0" width="14" height="1" fill="#000"/><rect x="4" y="2" width="10" height="1" fill="#000"/><rect x="0" y="4" width="14" height="1" fill="#000"/><rect x="4" y="6" width="10" height="1" fill="#000"/><rect x="0" y="8" width="14" height="1" fill="#000"/><rect x="4" y="10" width="10" height="1" fill="#000"/></svg>
<svg style="left:404px;top:80px" width="13" height="12" viewBox="0 0 13 12" ><circle cx="1.500" cy="1.5" r="1.500" fill="url(#gBall)"/><rect x="5" y="0.8" width="8" height="1.400" fill="#000"/><circle cx="1.500" cy="6.5" r="1.500" fill="url(#gBall)"/><rect x="5" y="5.8" width="8" height="1.400" fill="#000"/><circle cx="1.500" cy="11.5" r="1.500" fill="url(#gBall)"/><rect x="5" y="10.8" width="8" height="1.400" fill="#000"/></svg>
<svg style="left:426px;top:79px" width="16" height="15" viewBox="0 0 16 15" ><path d="M0 6.500l3.500-3v2h3v2h-3v2z" fill="#3c6ad8"/><rect x="7" y="0" width="1" height="1" fill="#000"/><rect x="7" y="2" width="1" height="1" fill="#000"/><rect x="7" y="4" width="1" height="1" fill="#000"/><rect x="7" y="6" width="1" height="1" fill="#000"/><rect x="7" y="8" width="1" height="1" fill="#000"/><rect x="7" y="10" width="1" height="1" fill="#000"/><rect x="7" y="12" width="1" height="1" fill="#000"/><rect x="7" y="14" width="1" height="1" fill="#000"/><rect x="2" y="2" width="5" height="1" fill="#000"/><rect x="9" y="2" width="7" height="1" fill="#000"/><rect x="9" y="4" width="7" height="2" fill="#000"/><rect x="9" y="7" width="5" height="2" fill="#000"/><rect x="2" y="10" width="5" height="1" fill="#000"/><rect x="9" y="10" width="7" height="1" fill="#000"/><rect x="2" y="12" width="4" height="1" fill="#000"/><rect x="9" y="12" width="2" height="1" fill="#000"/></svg>
<svg style="left:449px;top:79px" width="16" height="15" viewBox="0 0 16 15" ><path d="M6.500 6.500l-3.500-3v2h-3v2h3v2z" fill="#3c6ad8"/><rect x="7" y="0" width="1" height="1" fill="#000"/><rect x="7" y="2" width="1" height="1" fill="#000"/><rect x="7" y="4" width="1" height="1" fill="#000"/><rect x="7" y="6" width="1" height="1" fill="#000"/><rect x="7" y="8" width="1" height="1" fill="#000"/><rect x="7" y="10" width="1" height="1" fill="#000"/><rect x="7" y="12" width="1" height="1" fill="#000"/><rect x="7" y="14" width="1" height="1" fill="#000"/><rect x="2" y="2" width="5" height="1" fill="#000"/><rect x="9" y="2" width="7" height="1" fill="#000"/><rect x="9" y="4" width="7" height="2" fill="#000"/><rect x="9" y="7" width="5" height="2" fill="#000"/><rect x="2" y="10" width="5" height="1" fill="#000"/><rect x="9" y="10" width="7" height="1" fill="#000"/><rect x="2" y="12" width="4" height="1" fill="#000"/><rect x="9" y="12" width="2" height="1" fill="#000"/></svg>
<svg style="left:478px;top:79px" width="16" height="16" viewBox="0 0 16 16" ><text x="8" y="11.300" text-anchor="middle" font-family="Liberation Serif" font-weight="bold" font-size="16" fill="#2c4f9e">A</text><rect x="0" y="12" width="16" height="4" fill="#f0efec"/></svg>
<svg style="left:500px;top:86px" width="5" height="3" viewBox="0 0 5 3" shape-rendering="crispEdges"><path d="M0 0h5l-2.5 3z" fill="#000"/></svg>
<svg style="left:512px;top:78px" width="17" height="17" viewBox="0 0 17 17" ><path d="M13.200 1.200q1.200-1.500 2.400-.5t.2 2.400l-2.200 2.800-2.400-2z" fill="#e3b12c" stroke="#8a6a10" stroke-width=".5"/><path d="M11.200 3.900l2.400 2c-1.500 3.500-4 5-7.500 5.300-1 .1-2 .5-2.600.9 1-2 2-2.500 3.300-3.200 2-1.100 3.300-2.800 4.400-5z" fill="#7fa6ea" stroke="#3a5aa8" stroke-width=".6"/><rect x="0" y="10.500" width="3" height="2" fill="#1c3cc0"/><rect x="0" y="13" width="16" height="4" fill="#1e1e1e"/></svg>
<svg style="left:534px;top:86px" width="5" height="3" viewBox="0 0 5 3" shape-rendering="crispEdges"><path d="M0 0h5l-2.5 3z" fill="#000"/></svg>
<svg style="left:546px;top:78px" width="17" height="17" viewBox="0 0 17 17" ><path d="M6.500 1.500l6 5-5.500 5.500-6-5z" fill="#fdfdff" stroke="#6a7488" stroke-width="1"/><path d="M6.500 .5v5" stroke="#777" stroke-width="1.200"/><path d="M2 6.500l5-4.500 5 4z" fill="#dfe5f0"/><path d="M12 5c2.500 1 3.200 3.500 2.200 6.500-1-1.500-1.600-3.500-2.700-5z" fill="#3c74dc"/><rect x="0" y="13" width="16" height="4" fill="#00aeef"/></svg>
<svg style="left:568px;top:86px" width="5" height="3" viewBox="0 0 5 3" shape-rendering="crispEdges"><path d="M0 0h5l-2.5 3z" fill="#000"/></svg>
<svg style="left:581px;top:80px" width="16" height="15" viewBox="0 0 16 15" ><rect x=".5" y=".5" width="11" height="11" fill="#f4f7fc" stroke="#5b6f9a"/><rect x="1" y="1" width="10" height="2" fill="#d5def0"/><path d="M4 2l2 2-2 2-2-2z" fill="#f2c21a" stroke="#a07c10" stroke-width=".5"/><rect x="7" y="3" width="3" height="3" fill="#4aa83c" stroke="#2a6a22" stroke-width=".5"/><rect x="3" y="7" width="3" height="3" fill="#d83a2e" stroke="#8a1e18" stroke-width=".5"/><path d="M5 5.500v2M5.500 4h2" stroke="#666" stroke-width=".6"/><path d="M15.300 4.500q1 1 0 2l-3 3.500-1.800-1.500 3-3.600q.9-1 1.800-.4z" fill="#e9b530" stroke="#8a6a10" stroke-width=".5"/><path d="M10.500 8.500l1.800 1.500c-1 2.500-3 3.800-6 4.200-1 .1-1.600.4-2 .8.500-1.500 1.500-2.200 2.800-2.900 1.600-.8 2.600-2 3.400-3.600z" fill="#5f86d8" stroke="#2f4f9e" stroke-width=".5"/></svg>
<div class="t" id="t17" style="left:599.4px;top:80.5px;font-size:12px;color:#000;transform-origin:0 0;transform:scaleX(0.9793);">The<u>m</u>e</div>
<svg style="left:652px;top:82px" width="15" height="10" viewBox="0 0 15 10" ><rect x="0" y="0" width="15" height="1" fill="#000"/><rect x="0" y="3" width="15" height="2" fill="#000"/><rect x="0" y="7" width="15" height="3" fill="#000"/></svg>
<svg style="left:674px;top:86px" width="5" height="3" viewBox="0 0 5 3" shape-rendering="crispEdges"><path d="M0 0h5l-2.5 3z" fill="#000"/></svg>
<svg style="left:686px;top:82px" width="16" height="10" viewBox="0 0 16 10" ><rect x="0" y="0" width="16" height="1" fill="#000"/><rect x="0" y="3" width="1" height="1" fill="#000"/><rect x="2" y="3" width="1" height="1" fill="#000"/><rect x="4" y="3" width="1" height="1" fill="#000"/><rect x="6" y="3" width="1" height="1" fill="#000"/><rect x="8" y="3" width="1" height="1" fill="#000"/><rect x="10" y="3" width="1" height="1" fill="#000"/><rect x="12" y="3" width="1" height="1" fill="#000"/><rect x="14" y="3" width="1" height="1" fill="#000"/><rect x="0" y="6" width="3" height="1" fill="#000"/><rect x="4" y="6" width="3" height="1" fill="#000"/><rect x="8" y="6" width="3" height="1" fill="#000"/><rect x="12" y="6" width="3" height="1" fill="#000"/><rect x="0" y="9" width="3" height="1" fill="#000"/><rect x="4" y="9" width="1" height="0" fill="#000"/><rect x="5" y="9" width="3" height="1" fill="#000"/><rect x="9" y="9" width="1" height="0" fill="#000"/><rect x="10" y="9" width="3" height="1" fill="#000"/><rect x="14" y="9" width="1" height="0" fill="#000"/><rect x="15" y="9" width="3" height="1" fill="#000"/><rect x="19" y="9" width="1" height="0" fill="#000"/></svg>
<svg style="left:708px;top:86px" width="5" height="3" viewBox="0 0 5 3" shape-rendering="crispEdges"><path d="M0 0h5l-2.5 3z" fill="#000"/></svg>
<svg style="left:720px;top:79px" width="16" height="14" viewBox="0 0 16 14" ><path d="M0 2.500h14M1 7.500h15M1 12.500h14" stroke="#000" stroke-width="1.100"/><path d="M16 2.500l-4.500-2.500v5zM0 7.500l4.500-2.500v5zM0 12.500l4-2.300v4.600zM16 12.500l-4-2.300v4.600z" fill="#000"/></svg>
<svg style="left:742px;top:86px" width="5" height="3" viewBox="0 0 5 3" shape-rendering="crispEdges"><path d="M0 0h5l-2.5 3z" fill="#000"/></svg>
<div style="left:0;top:100px;width:1276px;height:2px;background:linear-gradient(#a3a3a3,#8f8f8f)"></div>
<div style="left:0;top:100px;width:2px;height:635px;background:#9c9c9c"></div>
<svg style="left:2px;top:102px" width="1255" height="16" viewBox="2 102 1255 16" shape-rendering="crispEdges"><defs><linearGradient id="rg" x1="0" y1="0" x2="0" y2="1"><stop offset="0" stop-color="#fff"/><stop offset=".5" stop-color="#f3f3f3"/><stop offset="1" stop-color="#dcdcdc"/></linearGradient></defs><rect x="2" y="102" width="1255" height="15" fill="url(#rg)"/><rect x="2" y="102" width="15" height="15" fill="#fff"/><rect x="21" y="111" width="1" height="6" fill="#7a7a7a"/><rect x="24" y="113" width="1" height="4" fill="#7a7a7a"/><rect x="27" y="107" width="1" height="10" fill="#7a7a7a"/><rect x="30" y="113" width="1" height="4" fill="#7a7a7a"/><rect x="33" y="111" width="1" height="6" fill="#7a7a7a"/><rect x="36" y="113" width="1" height="4" fill="#7a7a7a"/><rect x="39" y="109" width="1" height="8" fill="#7a7a7a"/><rect x="42" y="113" width="1" height="4" fill="#7a7a7a"/><rect x="45" y="111" width="1" height="6" fill="#7a7a7a"/><rect x="48" y="113" width="1" height="4" fill="#7a7a7a"/><rect x="51" y="102" width="1" height="15" fill="#8a8a8a"/><rect x="54" y="113" width="1" height="4" fill="#7a7a7a"/><rect x="57" y="111" width="1" height="6" fill="#7a7a7a"/><rect x="60" y="113" width="1" height="4" fill="#7a7a7a"/><rect x="63" y="109" width="1" height="8" fill="#7a7a7a"/><rect x="66" y="113" width="1" height="4" fill="#7a7a7a"/><rect x="69" y="111" width="1" height="6" fill="#7a7a7a"/><rect x="72" y="113" width="1" height="4" fill="#7a7a7a"/><rect x="75" y="107" width="1" height="10" fill="#7a7a7a"/><rect x="78" y="113" width="1" height="4" fill="#7a7a7a"/><rect x="81" y="111" width="1" height="6" fill="#7a7a7a"/><rect x="84" y="113" width="1" height="4" fill="#7a7a7a"/><rect x="87" y="109" width="1" height="8" fill="#7a7a7a"/><rect x="90" y="113" width="1" height="4" fill="#7a7a7a"/><rect x="93" y="111" width="1" height="6" fill="#7a7a7a"/><rect x="96" y="113" width="1" height="4" fill="#7a7a7a"/><rect x="99" y="102" width="1" height="15" fill="#8a8a8a"/><rect x="102" y="113" width="1" height="4" fill="#7a7a7a"/><rect x="105" y="111" width="1" height="6" fill="#7a7a7a"/><rect x="108" y="113" width="1" height="4" fill="#7a7a7a"/><rect x="111" y="109" width="1" height="8" fill="#7a7a7a"/><rect x="114" y="113" width="1" height="4" fill="#7a7a7a"/><rect x="117" y="111" width="1" height="6" fill="#7a7a7a"/><rect x="120" y="113" width="1" height="4" fill="#7a7a7a"/><rect x="123" y="107" width="1" height="10" fill="#7a7a7a"/><rect x="126" y="113" width="1" height="4" fill="#7a7a7a"/><rect x="129" y="111" width="1" height="6" fill="#7a7a7a"/><rect x="132" y="113" width="1" height="4" fill="#7a7a7a"/><rect x="135" y="109" width="1" height="8" fill="#7a7a7a"/><rect x="138" y="113" width="1" height="4" fill="#7a7a7a"/><rect x="141" y="111" width="1" height="6" fill="#7a7a7a"/><rect x="144" y="113" width="1" height="4" fill="#7a7a7a"/><rect x="147" y="102" width="1" height="15" fill="#8a8a8a"/><rect x="150" y="113" width="1" height="4" fill="#7a7a7a"/><rect x="153" y="111" width="1" height="6" fill="#7a7a7a"/><rect x="156" y="113" width="1" height="4" fill="#7a7a7a"/><rect x="159" y="109" width="1" height="8" fill="#7a7a7a"/><rect x="162" y="113" width="1" height="4" fill="#7a7a7a"/><rect x="165" y="111" width="1" height="6" fill="#7a7a7a"/><rect x="168" y="113" width="1" height="4" fill="#7a7a7a"/><rect x="171" y="107" width="1" height="10" fill="#7a7a7a"/><rect x="174" y="113" width="1" height="4" fill="#7a7a7a"/><rect x="177" y="111" width="1" height="6" fill="#7a7a7a"/><rect x="180" y="113" width="1" height="4" fill="#7a7a7a"/><rect x="183" y="109" width="1" height="8" fill="#7a7a7a"/><rect x="186" y="113" width="1" height="4" fill="#7a7a7a"/><rect x="189" y="111" width="1" height="6" fill="#7a7a7a"/><rect x="192" y="113" width="1" height="4" fill="#7a7a7a"/><rect x="195" y="102" width="1" height="15" fill="#8a8a8a"/><rect x="198" y="113" width="1" height="4" fill="#7a7a7a"/><rect x="201" y="111" width="1" height="6" fill="#7a7a7a"/><rect x="204" y="113" width="1" height="4" fill="#7a7a7a"/><rect x="207" y="109" width="1" height="8" fill="#7a7a7a"/><rect x="210" y="113" width="1" height="4" fill="#7a7a7a"/><rect x="213" y="111" width="1" height="6" fill="#7a7a7a"/><rect x="216" y="113" width="1" height="4" fill="#7a7a7a"/><rect x="219" y="107" width="1" height="10" fill="#7a7a7a"/><rect x="222" y="113" width="1" height="4" fill="#7a7a7a"/><rect x="225" y="111" width="1" height="6" fill="#7a7a7a"/><rect x="228" y="113" width="1" height="4" fill="#7a7a7a"/><rect x="231" y="109" width="1" height="8" fill="#7a7a7a"/><rect x="234" y="113" width="1" height="4" fill="#7a7a7a"/><rect x="237" y="111" width="1" height="6" fill="#7a7a7a"/><rect x="240" y="113" width="1" height="4" fill="#7a7a7a"/><rect x="243" y="102" width="1" height="15" fill="#8a8a8a"/><rect x="246" y="113" width="1" height="4" fill="#7a7a7a"/><rect x="249" y="111" width="1" height="6" fill="#7a7a7a"/><rect x="252" y="113" width="1" height="4" fill="#7a7a7a"/><rect x="255" y="109" width="1" height="8" fill="#7a7a7a"/><rect x="258" y="113" width="1" height="4" fill="#7a7a7a"/><rect x="261" y="111" width="1" height="6" fill="#7a7a7a"/><rect x="264" y="113" width="1" height="4" fill="#7a7a7a"/><rect x="267" y="107" width="1" height="10" fill="#7a7a7a"/><rect x="270" y="113" width="1" height="4" fill="#7a7a7a"/><rect x="273" y="111" width="1" height="6" fill="#7a7a7a"/><rect x="276" y="113" width="1" height="4" fill="#7a7a7a"/><rect x="279" y="109" width="1" height="8" fill="#7a7a7a"/><rect x="282" y="113" width="1" height="4" fill="#7a7a7a"/><rect x="285" y="111" width="1" height="6" fill="#7a7a7a"/><rect x="288" y="113" width="1" height="4" fill="#7a7a7a"/><rect x="291" y="102" width="1" height="15" fill="#8a8a8a"/><rect x="294" y="113" width="1" height="4" fill="#7a7a7a"/><rect x="297" y="111" width="1" height="6" fill="#7a7a7a"/><rect x="300" y="113" width="1" height="4" fill="#7a7a7a"/><rect x="303" y="109" width="1" height="8" fill="#7a7a7a"/><rect x="306" y="113" width="1" height="4" fill="#7a7a7a"/><rect x="309" y="111" width="1" height="6" fill="#7a7a7a"/><rect x="312" y="113" width="1" height="4" fill="#7a7a7a"/><rect x="315" y="107" width="1" height="10" fill="#7a7a7a"/><rect x="318" y="113" width="1" height="4" fill="#7a7a7a"/><rect x="321" y="111" width="1" height="6" fill="#7a7a7a"/><rect x="324" y="113" width="1" height="4" fill="#7a7a7a"/><rect x="327" y="109" width="1" height="8" fill="#7a7a7a"/><rect x="330" y="113" width="1" height="4" fill="#7a7a7a"/><rect x="333" y="111" width="1" height="6" fill="#7a7a7a"/><rect x="336" y="113" width="1" height="4" fill="#7a7a7a"/><rect x="339" y="102" width="1" height="15" fill="#8a8a8a"/><rect x="342" y="113" width="1" height="4" fill="#7a7a7a"/><rect x="345" y="111" width="1" height="6" fill="#7a7a7a"/><rect x="348" y="113" width="1" height="4" fill="#7a7a7a"/><rect x="351" y="109" width="1" height="8" fill="#7a7a7a"/><rect x="354" y="113" width="1" height="4" fill="#7a7a7a"/><rect x="357" y="111" width="1" height="6" fill="#7a7a7a"/><rect x="360" y="113" width="1" height="4" fill="#7a7a7a"/><rect x="363" y="107" width="1" height="10" fill="#7a7a7a"/><rect x="366" y="113" width="1" height="4" fill="#7a7a7a"/><rect x="369" y="111" width="1" height="6" fill="#7a7a7a"/><rect x="372" y="113" width="1" height="4" fill="#7a7a7a"/><rect x="375" y="109" width="1" height="8" fill="#7a7a7a"/><rect x="378" y="113" width="1" height="4" fill="#7a7a7a"/><rect x="381" y="111" width="1" height="6" fill="#7a7a7a"/><rect x="384" y="113" width="1" height="4" fill="#7a7a7a"/><rect x="387" y="102" width="1" height="15" fill="#8a8a8a"/><rect x="390" y="113" width="1" height="4" fill="#7a7a7a"/><rect x="393" y="111" width="1" height="6" fill="#7a7a7a"/><rect x="396" y="113" width="1" height="4" fill="#7a7a7a"/><rect x="399" y="109" width="1" height="8" fill="#7a7a7a"/><rect x="402" y="113" width="1" height="4" fill="#7a7a7a"/><rect x="405" y="111" width="1" height="6" fill="#7a7a7a"/><rect x="408" y="113" width="1" height="4" fill="#7a7a7a"/><rect x="411" y="107" width="1" height="10" fill="#7a7a7a"/><rect x="414" y="113" width="1" height="4" fill="#7a7a7a"/><rect x="417" y="111" width="1" height="6" fill="#7a7a7a"/><rect x="420" y="113" width="1" height="4" fill="#7a7a7a"/><rect x="423" y="109" width="1" height="8" fill="#7a7a7a"/><rect x="426" y="113" width="1" height="4" fill="#7a7a7a"/><rect x="429" y="111" width="1" height="6" fill="#7a7a7a"/><rect x="432" y="113" width="1" height="4" fill="#7a7a7a"/><rect x="435" y="102" width="1" height="15" fill="#8a8a8a"/><rect x="438" y="113" width="1" height="4" fill="#7a7a7a"/><rect x="441" y="111" width="1" height="6" fill="#7a7a7a"/><rect x="444" y="113" width="1" height="4" fill="#7a7a7a"/><rect x="447" y="109" width="1" height="8" fill="#7a7a7a"/><rect x="450" y="113" width="1" height="4" fill="#7a7a7a"/><rect x="453" y="111" width="1" height="6" fill="#7a7a7a"/><rect x="456" y="113" width="1" height="4" fill="#7a7a7a"/><rect x="459" y="107" width="1" height="10" fill="#7a7a7a"/><rect x="462" y="113" width="1" height="4" fill="#7a7a7a"/><rect x="465" y="111" width="1" height="6" fill="#7a7a7a"/><rect x="468" y="113" width="1" height="4" fill="#7a7a7a"/><rect x="471" y="109" width="1" height="8" fill="#7a7a7a"/><rect x="474" y="113" width="1" height="4" fill="#7a7a7a"/><rect x="477" y="111" width="1" height="6" fill="#7a7a7a"/><rect x="480" y="113" width="1" height="4" fill="#7a7a7a"/><rect x="483" y="102" width="1" height="15" fill="#8a8a8a"/><rect x="486" y="113" width="1" height="4" fill="#7a7a7a"/><rect x="489" y="111" width="1" height="6" fill="#7a7a7a"/><rect x="492" y="113" width="1" height="4" fill="#7a7a7a"/><rect x="495" y="109" width="1" height="8" fill="#7a7a7a"/><rect x="498" y="113" width="1" height="4" fill="#7a7a7a"/><rect x="501" y="111" width="1" height="6" fill="#7a7a7a"/><rect x="504" y="113" width="1" height="4" fill="#7a7a7a"/><rect x="507" y="107" width="1" height="10" fill="#7a7a7a"/><rect x="510" y="113" width="1" height="4" fill="#7a7a7a"/><rect x="513" y="111" width="1" height="6" fill="#7a7a7a"/><rect x="516" y="113" width="1" height="4" fill="#7a7a7a"/><rect x="519" y="109" width="1" height="8" fill="#7a7a7a"/><rect x="522" y="113" width="1" height="4" fill="#7a7a7a"/><rect x="525" y="111" width="1" height="6" fill="#7a7a7a"/><rect x="528" y="113" width="1" height="4" fill="#7a7a7a"/><rect x="531" y="102" width="1" height="15" fill="#8a8a8a"/><rect x="534" y="113" width="1" height="4" fill="#7a7a7a"/><rect x="537" y="111" width="1" height="6" fill="#7a7a7a"/><rect x="540" y="113" width="1" height="4" fill="#7a7a7a"/><rect x="543" y="109" width="1" height="8" fill="#7a7a7a"/><rect x="546" y="113" width="1" height="4" fill="#7a7a7a"/><rect x="549" y="111" width="1" height="6" fill="#7a7a7a"/><rect x="552" y="113" width="1" height="4" fill="#7a7a7a"/><rect x="555" y="107" width="1" height="10" fill="#7a7a7a"/><rect x="558" y="113" width="1" height="4" fill="#7a7a7a"/><rect x="561" y="111" width="1" height="6" fill="#7a7a7a"/><rect x="564" y="113" width="1" height="4" fill="#7a7a7a"/><rect x="567" y="109" width="1" height="8" fill="#7a7a7a"/><rect x="570" y="113" width="1" height="4" fill="#7a7a7a"/><rect x="573" y="111" width="1" height="6" fill="#7a7a7a"/><rect x="576" y="113" width="1" height="4" fill="#7a7a7a"/><rect x="579" y="102" width="1" height="15" fill="#8a8a8a"/><rect x="582" y="113" width="1" height="4" fill="#7a7a7a"/><rect x="585" y="111" width="1" height="6" fill="#7a7a7a"/><rect x="588" y="113" width="1" height="4" fill="#7a7a7a"/><rect x="591" y="109" width="1" height="8" fill="#7a7a7a"/><rect x="594" y="113" width="1" height="4" fill="#7a7a7a"/><rect x="597" y="111" width="1" height="6" fill="#7a7a7a"/><rect x="600" y="113" width="1" height="4" fill="#7a7a7a"/><rect x="603" y="107" width="1" height="10" fill="#7a7a7a"/><rect x="606" y="113" width="1" height="4" fill="#7a7a7a"/><rect x="609" y="111" width="1" height="6" fill="#7a7a7a"/><rect x="612" y="113" width="1" height="4" fill="#7a7a7a"/><rect x="615" y="109" width="1" height="8" fill="#7a7a7a"/><rect x="618" y="113" width="1" height="4" fill="#7a7a7a"/><rect x="621" y="111" width="1" height="6" fill="#7a7a7a"/><rect x="624" y="113" width="1" height="4" fill="#7a7a7a"/><rect x="627" y="102" width="1" height="15" fill="#8a8a8a"/><rect x="630" y="113" width="1" height="4" fill="#7a7a7a"/><rect x="633" y="111" width="1" height="6" fill="#7a7a7a"/><rect x="636" y="113" width="1" height="4" fill="#7a7a7a"/><rect x="639" y="109" width="1" height="8" fill="#7a7a7a"/><rect x="642" y="113" width="1" height="4" fill="#7a7a7a"/><rect x="645" y="111" width="1" height="6" fill="#7a7a7a"/><rect x="648" y="113" width="1" height="4" fill="#7a7a7a"/><rect x="651" y="107" width="1" height="10" fill="#7a7a7a"/><rect x="654" y="113" width="1" height="4" fill="#7a7a7a"/><rect x="657" y="111" width="1" height="6" fill="#7a7a7a"/><rect x="660" y="113" width="1" height="4" fill="#7a7a7a"/><rect x="663" y="109" width="1" height="8" fill="#7a7a7a"/><rect x="666" y="113" width="1" height="4" fill="#7a7a7a"/><rect x="669" y="111" width="1" height="6" fill="#7a7a7a"/><rect x="672" y="113" width="1" height="4" fill="#7a7a7a"/><rect x="675" y="102" width="1" height="15" fill="#8a8a8a"/><rect x="678" y="113" width="1" height="4" fill="#7a7a7a"/><rect x="681" y="111" width="1" height="6" fill="#7a7a7a"/><rect x="684" y="113" width="1" height="4" fill="#7a7a7a"/><rect x="687" y="109" width="1" height="8" fill="#7a7a7a"/><rect x="690" y="113" width="1" height="4" fill="#7a7a7a"/><rect x="693" y="111" width="1" height="6" fill="#7a7a7a"/><rect x="696" y="113" width="1" height="4" fill="#7a7a7a"/><rect x="699" y="107" width="1" height="10" fill="#7a7a7a"/><rect x="702" y="113" width="1" height="4" fill="#7a7a7a"/><rect x="705" y="111" width="1" height="6" fill="#7a7a7a"/><rect x="708" y="113" width="1" height="4" fill="#7a7a7a"/><rect x="711" y="109" width="1" height="8" fill="#7a7a7a"/><rect x="714" y="113" width="1" height="4" fill="#7a7a7a"/><rect x="717" y="111" width="1" height="6" fill="#7a7a7a"/><rect x="720" y="113" width="1" height="4" fill="#7a7a7a"/><rect x="723" y="102" width="1" height="15" fill="#8a8a8a"/><rect x="726" y="113" width="1" height="4" fill="#7a7a7a"/><rect x="729" y="111" width="1" height="6" fill="#7a7a7a"/><rect x="732" y="113" width="1" height="4" fill="#7a7a7a"/><rect x="735" y="109" width="1" height="8" fill="#7a7a7a"/><rect x="738" y="113" width="1" height="4" fill="#7a7a7a"/><rect x="741" y="111" width="1" height="6" fill="#7a7a7a"/><rect x="744" y="113" width="1" height="4" fill="#7a7a7a"/><rect x="747" y="107" width="1" height="10" fill="#7a7a7a"/><rect x="750" y="113" width="1" height="4" fill="#7a7a7a"/><rect x="753" y="111" width="1" height="6" fill="#7a7a7a"/><rect x="756" y="113" width="1" height="4" fill="#7a7a7a"/><rect x="759" y="109" width="1" height="8" fill="#7a7a7a"/><rect x="762" y="113" width="1" height="4" fill="#7a7a7a"/><rect x="765" y="111" width="1" height="6" fill="#7a7a7a"/><rect x="768" y="113" width="1" height="4" fill="#7a7a7a"/><rect x="771" y="102" width="1" height="15" fill="#8a8a8a"/><rect x="774" y="113" width="1" height="4" fill="#7a7a7a"/><rect x="777" y="111" width="1" height="6" fill="#7a7a7a"/><rect x="780" y="113" width="1" height="4" fill="#7a7a7a"/><rect x="783" y="109" width="1" height="8" fill="#7a7a7a"/><rect x="786" y="113" width="1" height="4" fill="#7a7a7a"/><rect x="789" y="111" width="1" height="6" fill="#7a7a7a"/><rect x="792" y="113" width="1" height="4" fill="#7a7a7a"/><rect x="795" y="107" width="1" height="10" fill="#7a7a7a"/><rect x="798" y="113" width="1" height="4" fill="#7a7a7a"/><rect x="801" y="111" width="1" height="6" fill="#7a7a7a"/><rect x="804" y="113" width="1" height="4" fill="#7a7a7a"/><rect x="807" y="109" width="1" height="8" fill="#7a7a7a"/><rect x="810" y="113" width="1" height="4" fill="#7a7a7a"/><rect x="813" y="111" width="1" height="6" fill="#7a7a7a"/><rect x="816" y="113" width="1" height="4" fill="#7a7a7a"/><rect x="819" y="102" width="1" height="15" fill="#8a8a8a"/><rect x="822" y="113" width="1" height="4" fill="#7a7a7a"/><rect x="825" y="111" width="1" height="6" fill="#7a7a7a"/><rect x="828" y="113" width="1" height="4" fill="#7a7a7a"/><rect x="831" y="109" width="1" height="8" fill="#7a7a7a"/><rect x="834" y="113" width="1" height="4" fill="#7a7a7a"/><rect x="837" y="111" width="1" height="6" fill="#7a7a7a"/><rect x="840" y="113" width="1" height="4" fill="#7a7a7a"/><rect x="843" y="107" width="1" height="10" fill="#7a7a7a"/><rect x="846" y="113" width="1" height="4" fill="#7a7a7a"/><rect x="849" y="111" width="1" height="6" fill="#7a7a7a"/><rect x="852" y="113" width="1" height="4" fill="#7a7a7a"/><rect x="855" y="109" width="1" height="8" fill="#7a7a7a"/><rect x="858" y="113" width="1" height="4" fill="#7a7a7a"/><rect x="861" y="111" width="1" height="6" fill="#7a7a7a"/><rect x="864" y="113" width="1" height="4" fill="#7a7a7a"/><rect x="867" y="102" width="1" height="15" fill="#8a8a8a"/><rect x="870" y="113" width="1" height="4" fill="#7a7a7a"/><rect x="873" y="111" width="1" height="6" fill="#7a7a7a"/><rect x="876" y="113" width="1" height="4" fill="#7a7a7a"/><rect x="879" y="109" width="1" height="8" fill="#7a7a7a"/><rect x="882" y="113" width="1" height="4" fill="#7a7a7a"/><rect x="885" y="111" width="1" height="6" fill="#7a7a7a"/><rect x="888" y="113" width="1" height="4" fill="#7a7a7a"/><rect x="891" y="107" width="1" height="10" fill="#7a7a7a"/><rect x="894" y="113" width="1" height="4" fill="#7a7a7a"/><rect x="897" y="111" width="1" height="6" fill="#7a7a7a"/><rect x="900" y="113" width="1" height="4" fill="#7a7a7a"/><rect x="903" y="109" width="1" height="8" fill="#7a7a7a"/><rect x="906" y="113" width="1" height="4" fill="#7a7a7a"/><rect x="909" y="111" width="1" height="6" fill="#7a7a7a"/><rect x="912" y="113" width="1" height="4" fill="#7a7a7a"/><rect x="915" y="102" width="1" height="15" fill="#8a8a8a"/><rect x="918" y="113" width="1" height="4" fill="#7a7a7a"/><rect x="921" y="111" width="1" height="6" fill="#7a7a7a"/><rect x="924" y="113" width="1" height="4" fill="#7a7a7a"/><rect x="927" y="109" width="1" height="8" fill="#7a7a7a"/><rect x="930" y="113" width="1" height="4" fill="#7a7a7a"/><rect x="933" y="111" width="1" height="6" fill="#7a7a7a"/><rect x="936" y="113" width="1" height="4" fill="#7a7a7a"/><rect x="939" y="107" width="1" height="10" fill="#7a7a7a"/><rect x="942" y="113" width="1" height="4" fill="#7a7a7a"/><rect x="945" y="111" width="1" height="6" fill="#7a7a7a"/><rect x="948" y="113" width="1" height="4" fill="#7a7a7a"/><rect x="951" y="109" width="1" height="8" fill="#7a7a7a"/><rect x="954" y="113" width="1" height="4" fill="#7a7a7a"/><rect x="957" y="111" width="1" height="6" fill="#7a7a7a"/><rect x="960" y="113" width="1" height="4" fill="#7a7a7a"/><rect x="963" y="102" width="1" height="15" fill="#8a8a8a"/><rect x="966" y="113" width="1" height="4" fill="#7a7a7a"/><rect x="969" y="111" width="1" height="6" fill="#7a7a7a"/><rect x="972" y="113" width="1" height="4" fill="#7a7a7a"/><rect x="975" y="109" width="1" height="8" fill="#7a7a7a"/><rect x="978" y="113" width="1" height="4" fill="#7a7a7a"/><rect x="981" y="111" width="1" height="6" fill="#7a7a7a"/><rect x="984" y="113" width="1" height="4" fill="#7a7a7a"/><rect x="987" y="107" width="1" height="10" fill="#7a7a7a"/><rect x="990" y="113" width="1" height="4" fill="#7a7a7a"/><rect x="993" y="111" width="1" height="6" fill="#7a7a7a"/><rect x="996" y="113" width="1" height="4" fill="#7a7a7a"/><rect x="999" y="109" width="1" height="8" fill="#7a7a7a"/><rect x="1002" y="113" width="1" height="4" fill="#7a7a7a"/><rect x="1005" y="111" width="1" height="6" fill="#7a7a7a"/><rect x="1008" y="113" width="1" height="4" fill="#7a7a7a"/><rect x="1011" y="102" width="1" height="15" fill="#8a8a8a"/><rect x="1014" y="113" width="1" height="4" fill="#7a7a7a"/><rect x="1017" y="111" width="1" height="6" fill="#7a7a7a"/><rect x="1020" y="113" width="1" height="4" fill="#7a7a7a"/><rect x="1023" y="109" width="1" height="8" fill="#7a7a7a"/><rect x="1026" y="113" width="1" height="4" fill="#7a7a7a"/><rect x="1029" y="111" width="1" height="6" fill="#7a7a7a"/><rect x="1032" y="113" width="1" height="4" fill="#7a7a7a"/><rect x="1035" y="107" width="1" height="10" fill="#7a7a7a"/><rect x="1038" y="113" width="1" height="4" fill="#7a7a7a"/><rect x="1041" y="111" width="1" height="6" fill="#7a7a7a"/><rect x="1044" y="113" width="1" height="4" fill="#7a7a7a"/><rect x="1047" y="109" width="1" height="8" fill="#7a7a7a"/><rect x="1050" y="113" width="1" height="4" fill="#7a7a7a"/><rect x="1053" y="111" width="1" height="6" fill="#7a7a7a"/><rect x="1056" y="113" width="1" height="4" fill="#7a7a7a"/><rect x="1059" y="102" width="1" height="15" fill="#8a8a8a"/><rect x="1062" y="113" width="1" height="4" fill="#7a7a7a"/><rect x="1065" y="111" width="1" height="6" fill="#7a7a7a"/><rect x="1068" y="113" width="1" height="4" fill="#7a7a7a"/><rect x="1071" y="109" width="1" height="8" fill="#7a7a7a"/><rect x="1074" y="113" width="1" height="4" fill="#7a7a7a"/><rect x="1077" y="111" width="1" height="6" fill="#7a7a7a"/><rect x="1080" y="113" width="1" height="4" fill="#7a7a7a"/><rect x="1083" y="107" width="1" height="10" fill="#7a7a7a"/><rect x="1086" y="113" width="1" height="4" fill="#7a7a7a"/><rect x="1089" y="111" width="1" height="6" fill="#7a7a7a"/><rect x="1092" y="113" width="1" height="4" fill="#7a7a7a"/><rect x="1095" y="109" width="1" height="8" fill="#7a7a7a"/><rect x="1098" y="113" width="1" height="4" fill="#7a7a7a"/><rect x="1101" y="111" width="1" height="6" fill="#7a7a7a"/><rect x="1104" y="113" width="1" height="4" fill="#7a7a7a"/><rect x="1107" y="102" width="1" height="15" fill="#8a8a8a"/><rect x="1110" y="113" width="1" height="4" fill="#7a7a7a"/><rect x="1113" y="111" width="1" height="6" fill="#7a7a7a"/><rect x="1116" y="113" width="1" height="4" fill="#7a7a7a"/><rect x="1119" y="109" width="1" height="8" fill="#7a7a7a"/><rect x="1122" y="113" width="1" height="4" fill="#7a7a7a"/><rect x="1125" y="111" width="1" height="6" fill="#7a7a7a"/><rect x="1128" y="113" width="1" height="4" fill="#7a7a7a"/><rect x="1131" y="107" width="1" height="10" fill="#7a7a7a"/><rect x="1134" y="113" width="1" height="4" fill="#7a7a7a"/><rect x="1137" y="111" width="1" height="6" fill="#7a7a7a"/><rect x="1140" y="113" width="1" height="4" fill="#7a7a7a"/><rect x="1143" y="109" width="1" height="8" fill="#7a7a7a"/><rect x="1146" y="113" width="1" height="4" fill="#7a7a7a"/><rect x="1149" y="111" width="1" height="6" fill="#7a7a7a"/><rect x="1152" y="113" width="1" height="4" fill="#7a7a7a"/><rect x="1155" y="102" width="1" height="15" fill="#8a8a8a"/><rect x="1158" y="113" width="1" height="4" fill="#7a7a7a"/><rect x="1161" y="111" width="1" height="6" fill="#7a7a7a"/><rect x="1164" y="113" width="1" height="4" fill="#7a7a7a"/><rect x="1167" y="109" width="1" height="8" fill="#7a7a7a"/><rect x="1170" y="113" width="1" height="4" fill="#7a7a7a"/><rect x="1173" y="111" width="1" height="6" fill="#7a7a7a"/><rect x="1176" y="113" width="1" height="4" fill="#7a7a7a"/><rect x="1179" y="107" width="1" height="10" fill="#7a7a7a"/><rect x="1182" y="113" width="1" height="4" fill="#7a7a7a"/><rect x="1185" y="111" width="1" height="6" fill="#7a7a7a"/><rect x="1188" y="113" width="1" height="4" fill="#7a7a7a"/><rect x="1191" y="109" width="1" height="8" fill="#7a7a7a"/><rect x="1194" y="113" width="1" height="4" fill="#7a7a7a"/><rect x="1197" y="111" width="1" height="6" fill="#7a7a7a"/><rect x="1200" y="113" width="1" height="4" fill="#7a7a7a"/><rect x="1203" y="102" width="1" height="15" fill="#8a8a8a"/><rect x="1206" y="113" width="1" height="4" fill="#7a7a7a"/><rect x="1209" y="111" width="1" height="6" fill="#7a7a7a"/><rect x="1212" y="113" width="1" height="4" fill="#7a7a7a"/><rect x="1215" y="109" width="1" height="8" fill="#7a7a7a"/><rect x="1218" y="113" width="1" height="4" fill="#7a7a7a"/><rect x="1221" y="111" width="1" height="6" fill="#7a7a7a"/><rect x="1224" y="113" width="1" height="4" fill="#7a7a7a"/><rect x="1227" y="107" width="1" height="10" fill="#7a7a7a"/><rect x="1230" y="113" width="1" height="4" fill="#7a7a7a"/><rect x="1233" y="111" width="1" height="6" fill="#7a7a7a"/><rect x="1236" y="113" width="1" height="4" fill="#7a7a7a"/><rect x="1239" y="109" width="1" height="8" fill="#7a7a7a"/><rect x="1242" y="113" width="1" height="4" fill="#7a7a7a"/><rect x="1245" y="111" width="1" height="6" fill="#7a7a7a"/><rect x="1248" y="113" width="1" height="4" fill="#7a7a7a"/><rect x="1251" y="102" width="1" height="15" fill="#8a8a8a"/><rect x="1254" y="113" width="1" height="4" fill="#7a7a7a"/><rect x="17" y="117" width="1240" height="1" fill="#000"/><rect x="17" y="102" width="1" height="16" fill="#000"/><rect x="2" y="117" width="16" height="1" fill="#000"/><rect x="2" y="109" width="1" height="1" fill="#0000ff"/><rect x="9" y="102" width="1" height="1" fill="#0000ff"/><rect x="4" y="109" width="1" height="1" fill="#0000ff"/><rect x="9" y="104" width="1" height="1" fill="#0000ff"/><rect x="6" y="109" width="1" height="1" fill="#0000ff"/><rect x="9" y="106" width="1" height="1" fill="#0000ff"/><rect x="8" y="109" width="1" height="1" fill="#0000ff"/><rect x="9" y="108" width="1" height="1" fill="#0000ff"/><rect x="10" y="109" width="1" height="1" fill="#0000ff"/><rect x="9" y="110" width="1" height="1" fill="#0000ff"/><rect x="12" y="109" width="1" height="1" fill="#0000ff"/><rect x="9" y="112" width="1" height="1" fill="#0000ff"/><rect x="14" y="109" width="1" height="1" fill="#0000ff"/><rect x="9" y="114" width="1" height="1" fill="#0000ff"/><rect x="16" y="109" width="1" height="1" fill="#0000ff"/><rect x="9" y="116" width="1" height="1" fill="#0000ff"/></svg>
<div class="t" style="left:53px;top:101px;font-size:9.8px;color:#000">-8</div>
<div class="t" style="left:101px;top:101px;font-size:9.8px;color:#000">-7</div>
<div class="t" style="left:149px;top:101px;font-size:9.8px;color:#000">-6</div>
<div class="t" style="left:197px;top:101px;font-size:9.8px;color:#000">-5</div>
<div class="t" style="left:245px;top:101px;font-size:9.8px;color:#000">-4</div>
<div class="t" style="left:293px;top:101px;font-size:9.8px;color:#000">-3</div>
<div class="t" style="left:341px;top:101px;font-size:9.8px;color:#000">-2</div>
<div class="t" style="left:389px;top:101px;font-size:9.8px;color:#000">-1</div>
<div class="t" style="left:437px;top:101px;font-size:9.8px;color:#000">0</div>
<div class="t" style="left:485px;top:101px;font-size:9.8px;color:#000">1</div>
<div class="t" style="left:533px;top:101px;font-size:9.8px;color:#000">2</div>
<div class="t" style="left:581px;top:101px;font-size:9.8px;color:#000">3</div>
<div class="t" style="left:629px;top:101px;font-size:9.8px;color:#000">4</div>
<div class="t" style="left:677px;top:101px;font-size:9.8px;color:#000">5</div>
<div class="t" style="left:725px;top:101px;font-size:9.8px;color:#000">6</div>
<div class="t" style="left:773px;top:101px;font-size:9.8px;color:#000">7</div>
<div class="t" style="left:821px;top:101px;font-size:9.8px;color:#000">8</div>
<div class="t" style="left:869px;top:101px;font-size:9.8px;color:#000">9</div>
<div class="t" style="left:917px;top:101px;font-size:9.8px;color:#000">10</div>
<div class="t" style="left:965px;top:101px;font-size:9.8px;color:#000">11</div>
<div class="t" style="left:1013px;top:101px;font-size:9.8px;color:#000">12</div>
<div class="t" style="left:1061px;top:101px;font-size:9.8px;color:#000">13</div>
<div class="t" style="left:1109px;top:101px;font-size:9.8px;color:#000">14</div>
<div class="t" style="left:1157px;top:101px;font-size:9.8px;color:#000">15</div>
<div class="t" style="left:1205px;top:101px;font-size:9.8px;color:#000">16</div>
<div class="t" style="left:1253px;top:101px;font-size:9.8px;color:#000;width:4px;overflow:hidden">17</div>
<svg style="left:2px;top:118px" width="16" height="600" viewBox="2 118 16 600" shape-rendering="crispEdges"><defs><linearGradient id="rgv" x1="0" y1="0" x2="1" y2="0"><stop offset="0" stop-color="#fff"/><stop offset=".5" stop-color="#f3f3f3"/><stop offset="1" stop-color="#dcdcdc"/></linearGradient></defs><rect x="2" y="118" width="15" height="600" fill="url(#rgv)"/><rect x="9" y="119" width="8" height="1" fill="#7a7a7a"/><rect x="13" y="122" width="4" height="1" fill="#7a7a7a"/><rect x="11" y="125" width="6" height="1" fill="#7a7a7a"/><rect x="13" y="128" width="4" height="1" fill="#7a7a7a"/><rect x="2" y="131" width="15" height="1" fill="#7a7a7a"/><rect x="13" y="134" width="4" height="1" fill="#7a7a7a"/><rect x="11" y="137" width="6" height="1" fill="#7a7a7a"/><rect x="13" y="140" width="4" height="1" fill="#7a7a7a"/><rect x="9" y="143" width="8" height="1" fill="#7a7a7a"/><rect x="13" y="146" width="4" height="1" fill="#7a7a7a"/><rect x="11" y="149" width="6" height="1" fill="#7a7a7a"/><rect x="13" y="152" width="4" height="1" fill="#7a7a7a"/><rect x="7" y="155" width="10" height="1" fill="#7a7a7a"/><rect x="13" y="158" width="4" height="1" fill="#7a7a7a"/><rect x="11" y="161" width="6" height="1" fill="#7a7a7a"/><rect x="13" y="164" width="4" height="1" fill="#7a7a7a"/><rect x="9" y="167" width="8" height="1" fill="#7a7a7a"/><rect x="13" y="170" width="4" height="1" fill="#7a7a7a"/><rect x="11" y="173" width="6" height="1" fill="#7a7a7a"/><rect x="13" y="176" width="4" height="1" fill="#7a7a7a"/><rect x="2" y="179" width="15" height="1" fill="#7a7a7a"/><rect x="13" y="182" width="4" height="1" fill="#7a7a7a"/><rect x="11" y="185" width="6" height="1" fill="#7a7a7a"/><rect x="13" y="188" width="4" height="1" fill="#7a7a7a"/><rect x="9" y="191" width="8" height="1" fill="#7a7a7a"/><rect x="13" y="194" width="4" height="1" fill="#7a7a7a"/><rect x="11" y="197" width="6" height="1" fill="#7a7a7a"/><rect x="13" y="200" width="4" height="1" fill="#7a7a7a"/><rect x="7" y="203" width="10" height="1" fill="#7a7a7a"/><rect x="13" y="206" width="4" height="1" fill="#7a7a7a"/><rect x="11" y="209" width="6" height="1" fill="#7a7a7a"/><rect x="13" y="212" width="4" height="1" fill="#7a7a7a"/><rect x="9" y="215" width="8" height="1" fill="#7a7a7a"/><rect x="13" y="218" width="4" height="1" fill="#7a7a7a"/><rect x="11" y="221" width="6" height="1" fill="#7a7a7a"/><rect x="13" y="224" width="4" height="1" fill="#7a7a7a"/><rect x="2" y="227" width="15" height="1" fill="#7a7a7a"/><rect x="13" y="230" width="4" height="1" fill="#7a7a7a"/><rect x="11" y="233" width="6" height="1" fill="#7a7a7a"/><rect x="13" y="236" width="4" height="1" fill="#7a7a7a"/><rect x="9" y="239" width="8" height="1" fill="#7a7a7a"/><rect x="13" y="242" width="4" height="1" fill="#7a7a7a"/><rect x="11" y="245" width="6" height="1" fill="#7a7a7a"/><rect x="13" y="248" width="4" height="1" fill="#7a7a7a"/><rect x="7" y="251" width="10" height="1" fill="#7a7a7a"/><rect x="13" y="254" width="4" height="1" fill="#7a7a7a"/><rect x="11" y="257" width="6" height="1" fill="#7a7a7a"/><rect x="13" y="260" width="4" height="1" fill="#7a7a7a"/><rect x="9" y="263" width="8" height="1" fill="#7a7a7a"/><rect x="13" y="266" width="4" height="1" fill="#7a7a7a"/><rect x="11" y="269" width="6" height="1" fill="#7a7a7a"/><rect x="13" y="272" width="4" height="1" fill="#7a7a7a"/><rect x="2" y="275" width="15" height="1" fill="#7a7a7a"/><rect x="13" y="278" width="4" height="1" fill="#7a7a7a"/><rect x="11" y="281" width="6" height="1" fill="#7a7a7a"/><rect x="13" y="284" width="4" height="1" fill="#7a7a7a"/><rect x="9" y="287" width="8" height="1" fill="#7a7a7a"/><rect x="13" y="290" width="4" height="1" fill="#7a7a7a"/><rect x="11" y="293" width="6" height="1" fill="#7a7a7a"/><rect x="13" y="296" width="4" height="1" fill="#7a7a7a"/><rect x="7" y="299" width="10" height="1" fill="#7a7a7a"/><rect x="13" y="302" width="4" height="1" fill="#7a7a7a"/><rect x="11" y="305" width="6" height="1" fill="#7a7a7a"/><rect x="13" y="308" width="4" height="1" fill="#7a7a7a"/><rect x="9" y="311" width="8" height="1" fill="#7a7a7a"/><rect x="13" y="314" width="4" height="1" fill="#7a7a7a"/><rect x="11" y="317" width="6" height="1" fill="#7a7a7a"/><rect x="13" y="320" width="4" height="1" fill="#7a7a7a"/><rect x="2" y="323" width="15" height="1" fill="#7a7a7a"/><rect x="13" y="326" width="4" height="1" fill="#7a7a7a"/><rect x="11" y="329" width="6" height="1" fill="#7a7a7a"/><rect x="13" y="332" width="4" height="1" fill="#7a7a7a"/><rect x="9" y="335" width="8" height="1" fill="#7a7a7a"/><rect x="13" y="338" width="4" height="1" fill="#7a7a7a"/><rect x="11" y="341" width="6" height="1" fill="#7a7a7a"/><rect x="13" y="344" width="4" height="1" fill="#7a7a7a"/><rect x="7" y="347" width="10" height="1" fill="#7a7a7a"/><rect x="13" y="350" width="4" height="1" fill="#7a7a7a"/><rect x="11" y="353" width="6" height="1" fill="#7a7a7a"/><rect x="13" y="356" width="4" height="1" fill="#7a7a7a"/><rect x="9" y="359" width="8" height="1" fill="#7a7a7a"/><rect x="13" y="362" width="4" height="1" fill="#7a7a7a"/><rect x="11" y="365" width="6" height="1" fill="#7a7a7a"/><rect x="13" y="368" width="4" height="1" fill="#7a7a7a"/><rect x="2" y="371" width="15" height="1" fill="#7a7a7a"/><rect x="13" y="374" width="4" height="1" fill="#7a7a7a"/><rect x="11" y="377" width="6" height="1" fill="#7a7a7a"/><rect x="13" y="380" width="4" height="1" fill="#7a7a7a"/><rect x="9" y="383" width="8" height="1" fill="#7a7a7a"/><rect x="13" y="386" width="4" height="1" fill="#7a7a7a"/><rect x="11" y="389" width="6" height="1" fill="#7a7a7a"/><rect x="13" y="392" width="4" height="1" fill="#7a7a7a"/><rect x="7" y="395" width="10" height="1" fill="#7a7a7a"/><rect x="13" y="398" width="4" height="1" fill="#7a7a7a"/><rect x="11" y="401" width="6" height="1" fill="#7a7a7a"/><rect x="13" y="404" width="4" height="1" fill="#7a7a7a"/><rect x="9" y="407" width="8" height="1" fill="#7a7a7a"/><rect x="13" y="410" width="4" height="1" fill="#7a7a7a"/><rect x="11" y="413" width="6" height="1" fill="#7a7a7a"/><rect x="13" y="416" width="4" height="1" fill="#7a7a7a"/><rect x="2" y="419" width="15" height="1" fill="#7a7a7a"/><rect x="13" y="422" width="4" height="1" fill="#7a7a7a"/><rect x="11" y="425" width="6" height="1" fill="#7a7a7a"/><rect x="13" y="428" width="4" height="1" fill="#7a7a7a"/><rect x="9" y="431" width="8" height="1" fill="#7a7a7a"/><rect x="13" y="434" width="4" height="1" fill="#7a7a7a"/><rect x="11" y="437" width="6" height="1" fill="#7a7a7a"/><rect x="13" y="440" width="4" height="1" fill="#7a7a7a"/><rect x="7" y="443" width="10" height="1" fill="#7a7a7a"/><rect x="13" y="446" width="4" height="1" fill="#7a7a7a"/><rect x="11" y="449" width="6" height="1" fill="#7a7a7a"/><rect x="13" y="452" width="4" height="1" fill="#7a7a7a"/><rect x="9" y="455" width="8" height="1" fill="#7a7a7a"/><rect x="13" y="458" width="4" height="1" fill="#7a7a7a"/><rect x="11" y="461" width="6" height="1" fill="#7a7a7a"/><rect x="13" y="464" width="4" height="1" fill="#7a7a7a"/><rect x="2" y="467" width="15" height="1" fill="#7a7a7a"/><rect x="13" y="470" width="4" height="1" fill="#7a7a7a"/><rect x="11" y="473" width="6" height="1" fill="#7a7a7a"/><rect x="13" y="476" width="4" height="1" fill="#7a7a7a"/><rect x="9" y="479" width="8" height="1" fill="#7a7a7a"/><rect x="13" y="482" width="4" height="1" fill="#7a7a7a"/><rect x="11" y="485" width="6" height="1" fill="#7a7a7a"/><rect x="13" y="488" width="4" height="1" fill="#7a7a7a"/><rect x="7" y="491" width="10" height="1" fill="#7a7a7a"/><rect x="13" y="494" width="4" height="1" fill="#7a7a7a"/><rect x="11" y="497" width="6" height="1" fill="#7a7a7a"/><rect x="13" y="500" width="4" height="1" fill="#7a7a7a"/><rect x="9" y="503" width="8" height="1" fill="#7a7a7a"/><rect x="13" y="506" width="4" height="1" fill="#7a7a7a"/><rect x="11" y="509" width="6" height="1" fill="#7a7a7a"/><rect x="13" y="512" width="4" height="1" fill="#7a7a7a"/><rect x="2" y="515" width="15" height="1" fill="#7a7a7a"/><rect x="13" y="518" width="4" height="1" fill="#7a7a7a"/><rect x="11" y="521" width="6" height="1" fill="#7a7a7a"/><rect x="13" y="524" width="4" height="1" fill="#7a7a7a"/><rect x="9" y="527" width="8" height="1" fill="#7a7a7a"/><rect x="13" y="530" width="4" height="1" fill="#7a7a7a"/><rect x="11" y="533" width="6" height="1" fill="#7a7a7a"/><rect x="13" y="536" width="4" height="1" fill="#7a7a7a"/><rect x="7" y="539" width="10" height="1" fill="#7a7a7a"/><rect x="13" y="542" width="4" height="1" fill="#7a7a7a"/><rect x="11" y="545" width="6" height="1" fill="#7a7a7a"/><rect x="13" y="548" width="4" height="1" fill="#7a7a7a"/><rect x="9" y="551" width="8" height="1" fill="#7a7a7a"/><rect x="13" y="554" width="4" height="1" fill="#7a7a7a"/><rect x="11" y="557" width="6" height="1" fill="#7a7a7a"/><rect x="13" y="560" width="4" height="1" fill="#7a7a7a"/><rect x="2" y="563" width="15" height="1" fill="#7a7a7a"/><rect x="13" y="566" width="4" height="1" fill="#7a7a7a"/><rect x="11" y="569" width="6" height="1" fill="#7a7a7a"/><rect x="13" y="572" width="4" height="1" fill="#7a7a7a"/><rect x="9" y="575" width="8" height="1" fill="#7a7a7a"/><rect x="13" y="578" width="4" height="1" fill="#7a7a7a"/><rect x="11" y="581" width="6" height="1" fill="#7a7a7a"/><rect x="13" y="584" width="4" height="1" fill="#7a7a7a"/><rect x="7" y="587" width="10" height="1" fill="#7a7a7a"/><rect x="13" y="590" width="4" height="1" fill="#7a7a7a"/><rect x="11" y="593" width="6" height="1" fill="#7a7a7a"/><rect x="13" y="596" width="4" height="1" fill="#7a7a7a"/><rect x="9" y="599" width="8" height="1" fill="#7a7a7a"/><rect x="13" y="602" width="4" height="1" fill="#7a7a7a"/><rect x="11" y="605" width="6" height="1" fill="#7a7a7a"/><rect x="13" y="608" width="4" height="1" fill="#7a7a7a"/><rect x="2" y="611" width="15" height="1" fill="#7a7a7a"/><rect x="13" y="614" width="4" height="1" fill="#7a7a7a"/><rect x="11" y="617" width="6" height="1" fill="#7a7a7a"/><rect x="13" y="620" width="4" height="1" fill="#7a7a7a"/><rect x="9" y="623" width="8" height="1" fill="#7a7a7a"/><rect x="13" y="626" width="4" height="1" fill="#7a7a7a"/><rect x="11" y="629" width="6" height="1" fill="#7a7a7a"/><rect x="13" y="632" width="4" height="1" fill="#7a7a7a"/><rect x="7" y="635" width="10" height="1" fill="#7a7a7a"/><rect x="13" y="638" width="4" height="1" fill="#7a7a7a"/><rect x="11" y="641" width="6" height="1" fill="#7a7a7a"/><rect x="13" y="644" width="4" height="1" fill="#7a7a7a"/><rect x="9" y="647" width="8" height="1" fill="#7a7a7a"/><rect x="13" y="650" width="4" height="1" fill="#7a7a7a"/><rect x="11" y="653" width="6" height="1" fill="#7a7a7a"/><rect x="13" y="656" width="4" height="1" fill="#7a7a7a"/><rect x="2" y="659" width="15" height="1" fill="#7a7a7a"/><rect x="13" y="662" width="4" height="1" fill="#7a7a7a"/><rect x="11" y="665" width="6" height="1" fill="#7a7a7a"/><rect x="13" y="668" width="4" height="1" fill="#7a7a7a"/><rect x="9" y="671" width="8" height="1" fill="#7a7a7a"/><rect x="13" y="674" width="4" height="1" fill="#7a7a7a"/><rect x="11" y="677" width="6" height="1" fill="#7a7a7a"/><rect x="13" y="680" width="4" height="1" fill="#7a7a7a"/><rect x="7" y="683" width="10" height="1" fill="#7a7a7a"/><rect x="13" y="686" width="4" height="1" fill="#7a7a7a"/><rect x="11" y="689" width="6" height="1" fill="#7a7a7a"/><rect x="13" y="692" width="4" height="1" fill="#7a7a7a"/><rect x="9" y="695" width="8" height="1" fill="#7a7a7a"/><rect x="13" y="698" width="4" height="1" fill="#7a7a7a"/><rect x="11" y="701" width="6" height="1" fill="#7a7a7a"/><rect x="13" y="704" width="4" height="1" fill="#7a7a7a"/><rect x="2" y="707" width="15" height="1" fill="#7a7a7a"/><rect x="13" y="710" width="4" height="1" fill="#7a7a7a"/><rect x="11" y="713" width="6" height="1" fill="#7a7a7a"/><rect x="13" y="716" width="4" height="1" fill="#7a7a7a"/><rect x="17" y="118" width="1" height="600" fill="#000"/></svg>
<div class="t" style="left:3.7px;top:133px;font-size:9.8px;color:#000;width:12px;height:10px;text-align:right;transform-origin:0 0;transform:translate(0px,12.3px) rotate(-90deg)">11</div>
<div class="t" style="left:3.7px;top:181px;font-size:9.8px;color:#000;width:12px;height:10px;text-align:right;transform-origin:0 0;transform:translate(0px,12.3px) rotate(-90deg)">10</div>
<div class="t" style="left:3.7px;top:229px;font-size:9.8px;color:#000;width:12px;height:10px;text-align:right;transform-origin:0 0;transform:translate(0px,12.3px) rotate(-90deg)">9</div>
<div class="t" style="left:3.7px;top:277px;font-size:9.8px;color:#000;width:12px;height:10px;text-align:right;transform-origin:0 0;transform:translate(0px,12.3px) rotate(-90deg)">8</div>
<div class="t" style="left:3.7px;top:325px;font-size:9.8px;color:#000;width:12px;height:10px;text-align:right;transform-origin:0 0;transform:translate(0px,12.3px) rotate(-90deg)">7</div>
<div class="t" style="left:3.7px;top:373px;font-size:9.8px;color:#000;width:12px;height:10px;text-align:right;transform-origin:0 0;transform:translate(0px,12.3px) rotate(-90deg)">6</div>
<div class="t" style="left:3.7px;top:421px;font-size:9.8px;color:#000;width:12px;height:10px;text-align:right;transform-origin:0 0;transform:translate(0px,12.3px) rotate(-90deg)">5</div>
<div class="t" style="left:3.7px;top:469px;font-size:9.8px;color:#000;width:12px;height:10px;text-align:right;transform-origin:0 0;transform:translate(0px,12.3px) rotate(-90deg)">4</div>
<div class="t" style="left:3.7px;top:517px;font-size:9.8px;color:#000;width:12px;height:10px;text-align:right;transform-origin:0 0;transform:translate(0px,12.3px) rotate(-90deg)">3</div>
<div class="t" style="left:3.7px;top:565px;font-size:9.8px;color:#000;width:12px;height:10px;text-align:right;transform-origin:0 0;transform:translate(0px,12.3px) rotate(-90deg)">2</div>
<div class="t" style="left:3.7px;top:613px;font-size:9.8px;color:#000;width:12px;height:10px;text-align:right;transform-origin:0 0;transform:translate(0px,12.3px) rotate(-90deg)">1</div>
<div class="t" style="left:3.7px;top:661px;font-size:9.8px;color:#000;width:12px;height:10px;text-align:right;transform-origin:0 0;transform:translate(0px,12.3px) rotate(-90deg)">0</div>
<div class="t" style="left:3.7px;top:709px;font-size:9.8px;color:#000;width:12px;height:10px;text-align:right;transform-origin:0 0;transform:translate(0px,12.3px) rotate(-90deg)">-1</div>
<div id="canvas">
<div style="left:417px;top:13px;width:409px;height:529px;background:#fff;border:1px solid #000;box-shadow:1px 4px 9px rgba(20,20,60,.6)"></div>
<svg style="left:418px;top:14px" width="407" height="527" viewBox="436 132 407 527" shape-rendering="crispEdges"><line x1="447.5" y1="132" x2="447.5" y2="659" stroke="#a9a9a9" stroke-dasharray="2 2" stroke-dashoffset="1"/><line x1="459.5" y1="132" x2="459.5" y2="659" stroke="#b0b0b0" stroke-dasharray="1 1" stroke-dashoffset="1"/><line x1="471.5" y1="132" x2="471.5" y2="659" stroke="#a9a9a9" stroke-dasharray="2 2" stroke-dashoffset="1"/><line x1="483.5" y1="132" x2="483.5" y2="659" stroke="#a9a9a9" stroke-dasharray="3 1" stroke-dashoffset="1"/><line x1="495.5" y1="132" x2="495.5" y2="659" stroke="#a9a9a9" stroke-dasharray="2 2" stroke-dashoffset="1"/><line x1="507.5" y1="132" x2="507.5" y2="659" stroke="#b0b0b0" stroke-dasharray="1 1" stroke-dashoffset="1"/><line x1="519.5" y1="132" x2="519.5" y2="659" stroke="#a9a9a9" stroke-dasharray="2 2" stroke-dashoffset="1"/><line x1="531.5" y1="132" x2="531.5" y2="659" stroke="#a9a9a9" stroke-dasharray="3 1" stroke-dashoffset="1"/><line x1="543.5" y1="132" x2="543.5" y2="659" stroke="#a9a9a9" stroke-dasharray="2 2" stroke-dashoffset="1"/><line x1="555.5" y1="132" x2="555.5" y2="659" stroke="#b0b0b0" stroke-dasharray="1 1" stroke-dashoffset="1"/><line x1="567.5" y1="132" x2="567.5" y2="659" stroke="#a9a9a9" stroke-dasharray="2 2" stroke-dashoffset="1"/><line x1="579.5" y1="132" x2="579.5" y2="659" stroke="#a9a9a9" stroke-dasharray="3 1" stroke-dashoffset="1"/><line x1="591.5" y1="132" x2="591.5" y2="659" stroke="#a9a9a9" stroke-dasharray="2 2" stroke-dashoffset="1"/><line x1="603.5" y1="132" x2="603.5" y2="659" stroke="#b0b0b0" stroke-dasharray="1 1" stroke-dashoffset="1"/><line x1="615.5" y1="132" x2="615.5" y2="659" stroke="#a9a9a9" stroke-dasharray="2 2" stroke-dashoffset="1"/><line x1="627.5" y1="132" x2="627.5" y2="659" stroke="#a9a9a9" stroke-dasharray="3 1" stroke-dashoffset="1"/><line x1="639.5" y1="132" x2="639.5" y2="659" stroke="#a9a9a9" stroke-dasharray="2 2" stroke-dashoffset="1"/><line x1="651.5" y1="132" x2="651.5" y2="659" stroke="#b0b0b0" stroke-dasharray="1 1" stroke-dashoffset="1"/><line x1="663.5" y1="132" x2="663.5" y2="659" stroke="#a9a9a9" stroke-dasharray="2 2" stroke-dashoffset="1"/><line x1="675.5" y1="132" x2="675.5" y2="659" stroke="#a9a9a9" stroke-dasharray="3 1" stroke-dashoffset="1"/><line x1="687.5" y1="132" x2="687.5" y2="659" stroke="#a9a9a9" stroke-dasharray="2 2" stroke-dashoffset="1"/><line x1="699.5" y1="132" x2="699.5" y2="659" stroke="#b0b0b0" stroke-dasharray="1 1" stroke-dashoffset="1"/><line x1="711.5" y1="132" x2="711.5" y2="659" stroke="#a9a9a9" stroke-dasharray="2 2" stroke-dashoffset="1"/><line x1="723.5" y1="132" x2="723.5" y2="659" stroke="#a9a9a9" stroke-dasharray="3 1" stroke-dashoffset="1"/><line x1="735.5" y1="132" x2="735.5" y2="659" stroke="#a9a9a9" stroke-dasharray="2 2" stroke-dashoffset="1"/><line x1="747.5" y1="132" x2="747.5" y2="659" stroke="#b0b0b0" stroke-dasharray="1 1" stroke-dashoffset="1"/><line x1="759.5" y1="132" x2="759.5" y2="659" stroke="#a9a9a9" stroke-dasharray="2 2" stroke-dashoffset="1"/><line x1="771.5" y1="132" x2="771.5" y2="659" stroke="#a9a9a9" stroke-dasharray="3 1" stroke-dashoffset="1"/><line x1="783.5" y1="132" x2="783.5" y2="659" stroke="#a9a9a9" stroke-dasharray="2 2" stroke-dashoffset="1"/><line x1="795.5" y1="132" x2="795.5" y2="659" stroke="#b0b0b0" stroke-dasharray="1 1" stroke-dashoffset="1"/><line x1="807.5" y1="132" x2="807.5" y2="659" stroke="#a9a9a9" stroke-dasharray="2 2" stroke-dashoffset="1"/><line x1="819.5" y1="132" x2="819.5" y2="659" stroke="#a9a9a9" stroke-dasharray="3 1" stroke-dashoffset="1"/><line x1="831.5" y1="132" x2="831.5" y2="659" stroke="#a9a9a9" stroke-dasharray="2 2" stroke-dashoffset="1"/><line x1="436" y1="143.5" x2="843" y2="143.5" stroke="#a9a9a9" stroke-dasharray="2 2" stroke-dashoffset="1"/><line x1="436" y1="155.5" x2="843" y2="155.5" stroke="#b0b0b0" stroke-dasharray="1 1" stroke-dashoffset="1"/><line x1="436" y1="167.5" x2="843" y2="167.5" stroke="#a9a9a9" stroke-dasharray="2 2" stroke-dashoffset="1"/><line x1="436" y1="179.5" x2="843" y2="179.5" stroke="#a9a9a9" stroke-dasharray="3 1" stroke-dashoffset="1"/><line x1="436" y1="191.5" x2="843" y2="191.5" stroke="#a9a9a9" stroke-dasharray="2 2" stroke-dashoffset="1"/><line x1="436" y1="203.5" x2="843" y2="203.5" stroke="#b0b0b0" stroke-dasharray="1 1" stroke-dashoffset="1"/><line x1="436" y1="215.5" x2="843" y2="215.5" stroke="#a9a9a9" stroke-dasharray="2 2" stroke-dashoffset="1"/><line x1="436" y1="227.5" x2="843" y2="227.5" stroke="#a9a9a9" stroke-dasharray="3 1" stroke-dashoffset="1"/><line x1="436" y1="239.5" x2="843" y2="239.5" stroke="#a9a9a9" stroke-dasharray="2 2" stroke-dashoffset="1"/><line x1="436" y1="251.5" x2="843" y2="251.5" stroke="#b0b0b0" stroke-dasharray="1 1" stroke-dashoffset="1"/><line x1="436" y1="263.5" x2="843" y2="263.5" stroke="#a9a9a9" stroke-dasharray="2 2" stroke-dashoffset="1"/><line x1="436" y1="275.5" x2="843" y2="275.5" stroke="#a9a9a9" stroke-dasharray="3 1" stroke-dashoffset="1"/><line x1="436" y1="287.5" x2="843" y2="287.5" stroke="#a9a9a9" stroke-dasharray="2 2" stroke-dashoffset="1"/><line x1="436" y1="299.5" x2="843" y2="299.5" stroke="#b0b0b0" stroke-dasharray="1 1" stroke-dashoffset="1"/><line x1="436" y1="311.5" x2="843" y2="311.5" stroke="#a9a9a9" stroke-dasharray="2 2" stroke-dashoffset="1"/><line x1="436" y1="323.5" x2="843" y2="323.5" stroke="#a9a9a9" stroke-dasharray="3 1" stroke-dashoffset="1"/><line x1="436" y1="335.5" x2="843" y2="335.5" stroke="#a9a9a9" stroke-dasharray="2 2" stroke-dashoffset="1"/><line x1="436" y1="347.5" x2="843" y2="347.5" stroke="#b0b0b0" stroke-dasharray="1 1" stroke-dashoffset="1"/><line x1="436" y1="359.5" x2="843" y2="359.5" stroke="#a9a9a9" stroke-dasharray="2 2" stroke-dashoffset="1"/><line x1="436" y1="371.5" x2="843" y2="371.5" stroke="#a9a9a9" stroke-dasharray="3 1" stroke-dashoffset="1"/><line x1="436" y1="383.5" x2="843" y2="383.5" stroke="#a9a9a9" stroke-dasharray="2 2" stroke-dashoffset="1"/><line x1="436" y1="395.5" x2="843" y2="395.5" stroke="#b0b0b0" stroke-dasharray="1 1" stroke-dashoffset="1"/><line x1="436" y1="407.5" x2="843" y2="407.5" stroke="#a9a9a9" stroke-dasharray="2 2" stroke-dashoffset="1"/><line x1="436" y1="419.5" x2="843" y2="419.5" stroke="#a9a9a9" stroke-dasharray="3 1" stroke-dashoffset="1"/><line x1="436" y1="431.5" x2="843" y2="431.5" stroke="#a9a9a9" stroke-dasharray="2 2" stroke-dashoffset="1"/><line x1="436" y1="443.5" x2="843" y2="443.5" stroke="#b0b0b0" stroke-dasharray="1 1" stroke-dashoffset="1"/><line x1="436" y1="455.5" x2="843" y2="455.5" stroke="#a9a9a9" stroke-dasharray="2 2" stroke-dashoffset="1"/><line x1="436" y1="467.5" x2="843" y2="467.5" stroke="#a9a9a9" stroke-dasharray="3 1" stroke-dashoffset="1"/><line x1="436" y1="479.5" x2="843" y2="479.5" stroke="#a9a9a9" stroke-dasharray="2 2" stroke-dashoffset="1"/><line x1="436" y1="491.5" x2="843" y2="491.5" stroke="#b0b0b0" stroke-dasharray="1 1" stroke-dashoffset="1"/><line x1="436" y1="503.5" x2="843" y2="503.5" stroke="#a9a9a9" stroke-dasharray="2 2" stroke-dashoffset="1"/><line x1="436" y1="515.5" x2="843" y2="515.5" stroke="#a9a9a9" stroke-dasharray="3 1" stroke-dashoffset="1"/><line x1="436" y1="527.5" x2="843" y2="527.5" stroke="#a9a9a9" stroke-dasharray="2 2" stroke-dashoffset="1"/><line x1="436" y1="539.5" x2="843" y2="539.5" stroke="#b0b0b0" stroke-dasharray="1 1" stroke-dashoffset="1"/><line x1="436" y1="551.5" x2="843" y2="551.5" stroke="#a9a9a9" stroke-dasharray="2 2" stroke-dashoffset="1"/><line x1="436" y1="563.5" x2="843" y2="563.5" stroke="#a9a9a9" stroke-dasharray="3 1" stroke-dashoffset="1"/><line x1="436" y1="575.5" x2="843" y2="575.5" stroke="#a9a9a9" stroke-dasharray="2 2" stroke-dashoffset="1"/><line x1="436" y1="587.5" x2="843" y2="587.5" stroke="#b0b0b0" stroke-dasharray="1 1" stroke-dashoffset="1"/><line x1="436" y1="599.5" x2="843" y2="599.5" stroke="#a9a9a9" stroke-dasharray="2 2" stroke-dashoffset="1"/><line x1="436" y1="611.5" x2="843" y2="611.5" stroke="#a9a9a9" stroke-dasharray="3 1" stroke-dashoffset="1"/><line x1="436" y1="623.5" x2="843" y2="623.5" stroke="#a9a9a9" stroke-dasharray="2 2" stroke-dashoffset="1"/><line x1="436" y1="635.5" x2="843" y2="635.5" stroke="#b0b0b0" stroke-dasharray="1 1" stroke-dashoffset="1"/><line x1="436" y1="647.5" x2="843" y2="647.5" stroke="#a9a9a9" stroke-dasharray="2 2" stroke-dashoffset="1"/></svg>
<div class="shape" style="left:440px;top:60px;width:243px;height:147px;background:linear-gradient(#b7cb86 0%,#c7d8a2 35%,#e3ebcf 70%,#fbfcf6 100%)"><div class="t">A</div></div>
<div class="shape" style="left:440px;top:252px;width:243px;height:147px;background:linear-gradient(#c3b6d3 0%,#d4cae0 35%,#ebe6f0 70%,#fcfbfd 100%)"><div class="t">B</div></div>
<div class="shape" style="left:656px;top:420px;width:243px;height:147px;background:linear-gradient(#74d6ff 0%,#98e1ff 35%,#cff0fd 70%,#fafdff 100%)"><div class="t">C</div></div>
<div style="left:0;top:599px;width:1239px;height:1px;background:#8283a2"></div>
</div>
<div style="left:1257px;top:102px;width:19px;height:616px;background:linear-gradient(90deg,#fdfdfd 0,#f0f0f0 3px,#f0f0f0 14px,#e4e4e4 17px,#fff 18px)"></div>
<div style="left:1276px;top:100px;width:4px;height:635px;background:#ababab"></div>
<div style="left:1258px;top:281px;width:15px;height:276px;border:1px solid #979797;border-radius:2px;box-shadow:inset 1px 1px 0 rgba(255,255,255,.95),inset 0 -1px 0 rgba(255,255,255,.6);background:linear-gradient(90deg,#f6f6f6 0,#ececec 45%,#d6d6d8 55%,#c6c6ca 85%,#d8d8da 100%)"></div>
<div style="left:1262px;top:415px;width:8px;height:1px;background:rgba(255,255,255,.75)"></div>
<div style="left:1262px;top:414px;width:7px;height:1px;background:linear-gradient(90deg,#2a2a2a,#555 50%,#9a9a9a)"></div>
<div style="left:1262px;top:418px;width:8px;height:1px;background:rgba(255,255,255,.75)"></div>
<div style="left:1262px;top:417px;width:7px;height:1px;background:linear-gradient(90deg,#2a2a2a,#555 50%,#9a9a9a)"></div>
<div style="left:1262px;top:421px;width:8px;height:1px;background:rgba(255,255,255,.75)"></div>
<div style="left:1262px;top:420px;width:7px;height:1px;background:linear-gradient(90deg,#2a2a2a,#555 50%,#9a9a9a)"></div>
<div style="left:1262px;top:109px;width:0;height:0;border-left:4px solid transparent;border-right:4px solid transparent;border-bottom:4px solid #4a4a4a"></div>
<div style="left:1262px;top:708px;width:0;height:0;border-left:4px solid transparent;border-right:4px solid transparent;border-top:4px solid #4a4a4a"></div>
<div style="left:2px;top:718px;width:621px;height:1px;background:#8788a6"></div>
<div style="left:2px;top:719px;width:68px;height:16px;background:#bfdbff"></div>
<div style="left:70px;top:719px;width:553px;height:16px;background:linear-gradient(#dcdce8,#e8e8f0 40%,#f4f4f9)"></div>
<div style="left:0;top:735px;width:1280px;height:2px;background:linear-gradient(#f6f6f6,#ffffff)"></div>
<svg style="left:2px;top:718px" width="68" height="18" viewBox="2 718 68 18"><g fill="#000">
<rect x="7" y="722" width="1.6" height="9"/><path d="M14 722v9l-5-4.5z"/>
<path d="M30 722v9l-5-4.5z"/>
<path d="M42 722v9l5-4.5z"/>
<path d="M58 722v9l5-4.5z"/><rect x="63.4" y="722" width="1.6" height="9"/>
</g></svg>
<svg style="left:68px;top:718px" width="72" height="18" viewBox="68 718 72 18"><path d="M70 719h66.5l-14 15.500h-50.500q-2 0 -2 -2z" fill="#fff"/><path d="M69.800 719v13.500q0 2 2 2h50.700l14-15.500" fill="none" stroke="#8384a2" stroke-width="1.200"/></svg>
<div class="t" id="t18" style="left:78px;top:722px;font-size:11px;color:#000;transform-origin:0 0;transform:scaleX(1.0948);font-weight:bold;">Page-1</div>
<div style="left:623px;top:718px;width:6px;height:17px;background:#fff;border-right:2px solid #666;border-bottom:1px solid #666;border-left:1px solid #e8e8ee"></div>
<div style="left:629px;top:718px;width:628px;height:17px;background:linear-gradient(#fdfdfd 0,#f0f0f0 3px,#f0f0f0 13px,#e6e6e6 17px)"></div>
<div style="left:647px;top:719px;width:588px;height:15px;border:1px solid #979797;border-radius:2px;box-shadow:inset 0 1px 0 rgba(255,255,255,.95),inset 1px 0 0 rgba(255,255,255,.7),inset -1px 0 0 rgba(255,255,255,.5);background:linear-gradient(#f6f6f6 0,#ececec 45%,#d6d6d8 55%,#c6c6ca 85%,#d8d8da 100%)"></div>
<div style="left:938px;top:723px;width:1px;height:8px;background:rgba(255,255,255,.75)"></div>
<div style="left:937px;top:723px;width:1px;height:7px;background:linear-gradient(#2a2a2a,#555 50%,#9a9a9a)"></div>
<div style="left:941px;top:723px;width:1px;height:8px;background:rgba(255,255,255,.75)"></div>
<div style="left:940px;top:723px;width:1px;height:7px;background:linear-gradient(#2a2a2a,#555 50%,#9a9a9a)"></div>
<div style="left:944px;top:723px;width:1px;height:8px;background:rgba(255,255,255,.75)"></div>
<div style="left:943px;top:723px;width:1px;height:7px;background:linear-gradient(#2a2a2a,#555 50%,#9a9a9a)"></div>
<div style="left:635px;top:722.500px;width:0;height:0;border-top:4px solid transparent;border-bottom:4px solid transparent;border-right:4px solid #4a4a4a"></div>
<div style="left:1247px;top:722.500px;width:0;height:0;border-top:4px solid transparent;border-bottom:4px solid transparent;border-left:4px solid #4a4a4a"></div>
<div style="left:1257px;top:718px;width:19px;height:17px;background:#f0f0f0"></div>
<div style="left:1270px;top:725px;width:2px;height:2px;background:#b4b4b4"></div><div style="left:1270px;top:728px;width:2px;height:2px;background:#b4b4b4"></div><div style="left:1267px;top:728px;width:2px;height:2px;background:#b4b4b4"></div><div style="left:1270px;top:731px;width:2px;height:2px;background:#b4b4b4"></div><div style="left:1267px;top:731px;width:2px;height:2px;background:#b4b4b4"></div><div style="left:1264px;top:731px;width:2px;height:2px;background:#b4b4b4"></div>
<div style="left:0;top:737px;width:1280px;height:23px;background:#bfdbff"></div>
<div class="cell" style="left:3px;width:180px"></div>
<div class="cell" style="left:188px;width:180px"></div>
<div class="cell" style="left:373px;width:180px"></div>
<div class="cell" style="left:558px;width:180px"></div>
<div class="cell" style="left:1139px;width:120px"></div>
<div class="t" id="t19" style="left:1176px;top:744px;font-size:12px;color:#000;transform-origin:0 0;transform:scaleX(0.9366);">Page 1/1</div>
<div style="left:990px;top:740px;width:59px;height:20px;background:#3b63a5"></div>
<div style="left:993px;top:743px;width:54px;height:18px;border:1px solid #dfe8f8;border-bottom:none"></div>
<div class="t" style="left:996.5px;top:747px;font-size:12px;color:#fff;width:12.5px;overflow:hidden">Cu</div>
<div style="left:1014px;top:750.5px;width:0;height:0;border-left:5px solid transparent;border-right:5px solid transparent;border-top:5px solid #fff"></div>
<svg style="left:1031px;top:749px" width="10" height="9" viewBox="0 0 10 9"><path d="M1.300 1.200l7.400 6.600M8.700 1.200l-7.400 6.600" stroke="#fff" stroke-width="1.500"/></svg>
<div id="taskbar"><div style="left:0;top:0;width:1280px;height:40px;background:#1d4a52"></div><div style="left:-80px;top:0;width:1440px;height:40px;transform-origin:0 0;transform:skewX(49deg);background:linear-gradient(90deg,#1b434a 0,#1b434a 80px,#1c464d 260px,#1f4f58 310px,#20545e 380px,#215560 640px,#225661 700px,#2a5d67 716px,#2c5f69 748px,#21535d 762px,#20525c 862px,#2c606a 874px,#2d616b 942px,#21535d 954px,#1f4f58 1040px,#1c4850 1140px,#1a4249 1200px,#1a4249 1255px,#23515a 1272px,#23515a 1305px,#1c464d 1325px,#1c464d 1440px)"></div><div style="left:0;top:0;width:1280px;height:40px;background:linear-gradient(rgba(0,0,0,.14) 0,rgba(0,0,0,.05) 5px,rgba(0,0,0,0) 10px)"></div><div style="left:0;top:0;width:1280px;height:1px;background:#0c2024"></div><div style="left:0;top:1px;width:1280px;height:1px;background:#5d7f85"></div><svg style="left:7px;top:1px" width="40" height="40" viewBox="0 0 40 40" ><circle cx="20.100" cy="19.500" r="18.200" fill="#0b3a78" stroke="#b0c8d6" stroke-width="1" stroke-opacity=".85"/>
<circle cx="20.100" cy="19.500" r="17" fill="url(#gOrb)"/>
<path d="M3.800 19.500a16.300 16.300 0 0 1 32.600 0c-8-2.500-24.600-2.500-32.600 0z" fill="url(#gOrbTop)"/>
<g transform="translate(21.400 19.400) scale(1.300) translate(-19.600 -18.800)"><path d="M12.500 10.500c2.500-1.500 4.500-1.500 7-.2l-1.500 7.200c-2.500-1.200-4.500-1.200-7 .2z" fill="url(#gFr)"/>
<path d="M21 10.800c2.500 1.500 4.800 1.500 7.300.2l-1.600 7.200c-2.500 1.300-4.700 1.300-7.200-.2z" fill="url(#gFg)"/>
<path d="M10.500 19.300c2.500-1.500 4.500-1.500 7-.2l-1.500 7.200c-2.500-1.200-4.500-1.200-7 .2z" fill="url(#gFb)"/>
<path d="M19 19.600c2.500 1.500 4.800 1.500 7.300.2l-1.600 7.200c-2.500 1.300-4.700 1.300-7.200-.2z" fill="url(#gFy)"/></g></svg><div style="left:59px;top:0px;width:60px;height:40px;border-radius:3px;border:1px solid #0c2226;background:radial-gradient(ellipse 40px 22px at 12px 2px,rgba(255,255,230,.55),rgba(255,255,230,0) 100%),linear-gradient(172deg,#f2eea0 0%,#ebe070 22%,#e0c050 42%,#d89c3a 60%,#d07c2e 80%,#ca6a28 100%);box-shadow:inset 0 0 0 1px rgba(255,255,220,.65)"></div><div style="left:121px;top:0px;width:60px;height:40px;border-radius:3px;border:1px solid #0c2226;background:linear-gradient(#6f8b8b 0%,#577779 35%,#41686c 50%,#36636a 70%,#32646a 100%);box-shadow:inset 0 0 0 1px rgba(255,255,255,.38)"><div style="left:1px;top:1px;width:54px;height:36px;border-radius:2px;background:radial-gradient(ellipse 70px 26px at 8px 0px,rgba(255,255,255,.28),rgba(255,255,255,.10) 70%,rgba(255,255,255,0) 72%)"></div></div><div style="left:183px;top:0px;width:60px;height:40px;border-radius:3px;border:1px solid #0c2226;background:linear-gradient(#6f8b8b 0%,#577779 35%,#41686c 50%,#36636a 70%,#32646a 100%);box-shadow:inset 0 0 0 1px rgba(255,255,255,.38)"><div style="left:1px;top:1px;width:54px;height:36px;border-radius:2px;background:radial-gradient(ellipse 70px 26px at 8px 0px,rgba(255,255,255,.28),rgba(255,255,255,.10) 70%,rgba(255,255,255,0) 72%)"></div></div><div style="left:369px;top:0px;width:60px;height:40px;border-radius:3px;border:1px solid #0c2226;background:linear-gradient(#6f8b8b 0%,#577779 35%,#41686c 50%,#36636a 70%,#32646a 100%);box-shadow:inset 0 0 0 1px rgba(255,255,255,.38)"><div style="left:1px;top:1px;width:54px;height:36px;border-radius:2px;background:radial-gradient(ellipse 70px 26px at 8px 0px,rgba(255,255,255,.28),rgba(255,255,255,.10) 70%,rgba(255,255,255,0) 72%)"></div></div><div style="left:431px;top:0px;width:60px;height:40px;border-radius:3px;border:1px solid #0c2226;background:linear-gradient(#6f8b8b 0%,#577779 35%,#41686c 50%,#36636a 70%,#32646a 100%);box-shadow:inset 0 0 0 1px rgba(255,255,255,.38)"><div style="left:1px;top:1px;width:54px;height:36px;border-radius:2px;background:radial-gradient(ellipse 70px 26px at 8px 0px,rgba(255,255,255,.28),rgba(255,255,255,.10) 70%,rgba(255,255,255,0) 72%)"></div></div><div style="left:493px;top:0px;width:60px;height:40px;border-radius:3px;border:1px solid #0c2226;background:linear-gradient(#6f8b8b 0%,#577779 35%,#41686c 50%,#36636a 70%,#32646a 100%);box-shadow:inset 0 0 0 1px rgba(255,255,255,.38)"><div style="left:1px;top:1px;width:54px;height:36px;border-radius:2px;background:radial-gradient(ellipse 70px 26px at 8px 0px,rgba(255,255,255,.28),rgba(255,255,255,.10) 70%,rgba(255,255,255,0) 72%)"></div></div><div style="left:555px;top:0px;width:60px;height:40px;border-radius:3px;border:1px solid #0c2226;background:linear-gradient(#6f8b8b 0%,#577779 35%,#41686c 50%,#36636a 70%,#32646a 100%);box-shadow:inset 0 0 0 1px rgba(255,255,255,.38)"><div style="left:1px;top:1px;width:54px;height:36px;border-radius:2px;background:radial-gradient(ellipse 70px 26px at 8px 0px,rgba(255,255,255,.28),rgba(255,255,255,.10) 70%,rgba(255,255,255,0) 72%)"></div></div><div style="left:617px;top:0px;width:60px;height:40px;border-radius:3px;border:1px solid #0c2226;background:linear-gradient(#c6d4d3 0%,#aabfbe 40%,#86a3a3 52%,#8eaaaa 75%,#a9bfbe 100%);box-shadow:inset 0 0 0 1px rgba(255,255,255,.8)"><div style="left:1px;top:1px;width:54px;height:36px;border-radius:2px;background:radial-gradient(ellipse 70px 26px at 8px 0px,rgba(255,255,255,.28),rgba(255,255,255,.10) 70%,rgba(255,255,255,0) 72%)"></div></div><svg style="left:72px;top:3px" width="34" height="34" viewBox="0 0 34 34" ><path d="M1.500 27.500v-19q0-7 7-7h19v19.500" fill="#f8cc8c" stroke="#f29a1c" stroke-width="1.600"/>
<path d="M1.500 27.500h10" stroke="#f29a1c" stroke-width="1.600"/>
<path d="M3.300 26.500v-17.500q0-5.500 5.500-5.500h17v8" fill="none" stroke="#fff" stroke-width="1.400"/>
<path d="M3.300 26.500h8" stroke="#fff" stroke-width="1.400"/>
<path d="M5.500 6.500l26.500 2.500-1.500 18.500-26.500-2.500z" fill="#fdfbf4" stroke="#eadcb8" stroke-width=".6"/>
<path d="M5.500 8.500l10 9M31.500 11l-10 7" fill="none" stroke="#dba034" stroke-width="1.500"/>
<circle cx="17.400" cy="20.400" r="9" fill="#f9d548" stroke="#e4940e" stroke-width="1.300"/>
<circle cx="16.800" cy="19.400" r="6.500" fill="#fce680" opacity=".8"/>
<path d="M12 15.500l5.200 5 5-2.800" fill="none" stroke="#c8820c" stroke-width="1.900"/></svg><svg style="left:132px;top:2px" width="40" height="37" viewBox="0 0 40 37" ><defs><linearGradient id="gIE" x1="0" y1="0" x2="0" y2="1"><stop offset="0" stop-color="#6cc4fa"/><stop offset=".45" stop-color="#1c7ce0"/><stop offset="1" stop-color="#0a2f8c"/></linearGradient></defs>
<ellipse cx="19" cy="18" rx="20" ry="6.500" fill="none" stroke="#c8b850" stroke-width="3.200" transform="rotate(-40 19 18)" stroke-dasharray="30 200" stroke-dashoffset="-52" opacity=".75"/>
<text x="20.500" y="31.200" text-anchor="middle" font-family="Liberation Sans" font-weight="bold" font-size="47" fill="url(#gIE)" stroke="#0a2a78" stroke-width=".6">e</text>
<ellipse cx="19" cy="18" rx="20" ry="6.500" fill="none" stroke="#f4b41c" stroke-width="2.200" transform="rotate(-40 19 18)" stroke-dasharray="56 200" stroke-dashoffset="-82"/>
<ellipse cx="19" cy="18" rx="20" ry="6.500" fill="none" stroke="#f8c838" stroke-width="2" transform="rotate(-40 19 18)" stroke-dasharray="24 200" stroke-dashoffset="-30"/></svg><svg style="left:196px;top:6px" width="34" height="31" viewBox="0 0 34 31" ><path d="M2 4.500q0-1.500 1.500-1.500h12l1.500 2.500h14q1.500 0 1.500 1.500v20h-30.500z" fill="#f0d27c" stroke="#d4b050" stroke-width=".8"/>
<rect x="4" y="2.500" width="10" height="3" fill="#fff"/><rect x="4" y="2" width="3" height="2" fill="#1cb428"/>
<rect x="12" y="4.500" width="10" height="3" fill="#fff"/><rect x="12" y="4" width="3" height="2" fill="#d83a2a"/>
<rect x="20" y="6.500" width="10" height="3" fill="#fff"/><rect x="20" y="6" width="3" height="2" fill="#1c8ce8"/>
<path d="M2 9.500h17l1.500 2h12v17h-30.500z" fill="#f9e49c" stroke="#dcbc5c" stroke-width=".8"/>
<path d="M6 29.500v-10q0-2.500 2.500-2.500h17q2.500 0 2.500 2.500v10h-5.500v-7h-11v7z" fill="#6cb8ec" stroke="#3a8cd0" stroke-width=".8"/>
<path d="M7 19.500q0-1.500 1.500-1.500h17q1.500 0 1.500 1.500v2h-20z" fill="#a8dcfa"/>
<circle cx="8.500" cy="18.500" r="2.500" fill="#fff" opacity=".9"/></svg><svg style="left:260px;top:8px" width="29" height="27" viewBox="0 0 29 27" ><path d="M24 2l4 1.500v20l-4 1.500z" fill="#8cc4ec"/><path d="M22 1.500l3 1v22l-3 1z" fill="#b4dcf6"/>
<path d="M1 1l22-.5v25.500l-22-2z" fill="#8fc9f0" stroke="#6aaede" stroke-width=".6"/>
<circle cx="11.500" cy="13" r="8.800" fill="#f2761c"/><circle cx="11.500" cy="12" r="7.500" fill="#fb9a3c" opacity=".7"/>
<path d="M8.500 7.500l8 5.500-8 5.500z" fill="#fff"/></svg><svg style="left:321px;top:7px" width="31" height="26" viewBox="0 0 31 26" ><rect x=".5" y=".5" width="30" height="25" fill="#000" stroke="#8a8f92"/>
<rect x="1" y="1" width="29" height="2" fill="#c6cacc"/><rect x="23" y="1.200" width="1.500" height="1" fill="#444"/><rect x="25.500" y="1.200" width="1.500" height="1" fill="#444"/><rect x="28" y="1.200" width="1.500" height="1" fill="#444"/>
<path d="M2 3h27v6h-27z" fill="#2a2a2a"/>
<text x="3.500" y="12.500" font-family="Liberation Mono" font-weight="bold" font-size="8.500" fill="#fff" textLength="13" lengthAdjust="spacingAndGlyphs">C:\</text><rect x="18" y="11.500" width="8" height="1.300" fill="#fff"/></svg><svg style="left:382px;top:5px" width="34" height="32" viewBox="0 0 34 32" ><path d="M2 2.500l29-1.500v25l-29 4z" fill="#e6eaf0" stroke="#9aa4b8" stroke-width=".8"/>
<path d="M4 4.500l25-1.300v21.300l-25 3.500z" fill="#2a90dc"/>
<path d="M4 4.500l25-1.300v9l-25 2z" fill="#58b4ee"/>
<path d="M4 22l25-3v5.500l-25 3.500z" fill="#1c70c0"/>
<path d="M8 11l16-2q2 0 2 2v8q0 2-2 2l-16 1.500q-2 0-2-2v-7.500q0-2 2-2z" fill="#b9bcc4" stroke="#6a6e7a" stroke-width=".7"/>
<rect x="8" y="13" width="4" height="7" fill="#3a3e4a"/>
<circle cx="19.500" cy="16.500" r="4" fill="#5a5e6a" stroke="#e4e6ea" stroke-width="1.200"/><circle cx="19.500" cy="16.500" r="1.800" fill="#1c1e2a"/>
<circle cx="16.500" cy="8.500" r="4.500" fill="#f8ec5a" opacity=".9"/><circle cx="16.500" cy="8.500" r="2" fill="#fffce0"/></svg><svg style="left:444px;top:6px" width="36" height="31" viewBox="0 0 36 31" ><circle cx="12" cy="7.500" r="4.300" fill="#4caa30"/><circle cx="11" cy="6.500" r="2.500" fill="#8cd868" opacity=".7"/>
<path d="M5.500 27v-9q0-5 6.500-5t6.500 5v9q-6.500 2.500-13 0z" fill="#4caa30"/><path d="M7 25v-7q0-3.500 3-3.500v11z" fill="#84d060" opacity=".6"/>
<circle cx="22" cy="6" r="4.800" fill="#4c9ce0"/><circle cx="21" cy="5" r="2.800" fill="#a4d4f8" opacity=".7"/>
<path d="M14.500 28.500v-10.500q0-6 7.500-6t7.500 6v10.500q-7.500 2.500-15 0z" fill="#4c9ce0"/><path d="M16.500 26v-8q0-4 3.500-4v13z" fill="#a4d4f8" opacity=".6"/>
<path d="M1 20c1-7 8-8 14-4.500s11 8 19 7c-7 2.500-13-.5-18-3.500s-12-4.500-13 2.500z" fill="#f6a82c"/>
<path d="M1.500 19c1.500-5 7-6 12-3.500" fill="none" stroke="#fbd078" stroke-width="1.300"/>
<path d="M30 14l4-3.500-1 5.500z" fill="#f6a82c"/></svg><svg style="left:506px;top:8px" width="34" height="28" viewBox="0 0 34 28" ><defs><linearGradient id="gVr" x1="0" y1="1" x2="1" y2="0"><stop offset="0" stop-color="#e4381c"/><stop offset=".5" stop-color="#f46a3c"/><stop offset="1" stop-color="#f88a50"/></linearGradient></defs>
<path d="M1 10.500l7-8.500h1.500v5.800l-4 3.700z" fill="#6cb83c"/><path d="M1 10.500l3.500-.2 1 .7-4.500 1.500z" fill="#b4c83c"/>
<path d="M1 12l4.500-1 3.800 3.800v5.200h-1.800l-6.500-7z" fill="#3c80dc"/>
<path d="M8 2h7l4.500 4.500-3.500 4-3.500-3h-3z" fill="#f8d438"/><path d="M8 2h3l-1.500 5.500h-1z" fill="#e8dc50"/>
<path d="M16 16l3.500-3.500 3.500 3.500 3 0v4l-5.500 0z" fill="#f8c820"/>
<path d="M8 20v-5l13.500-13h5v5l-13 13z" fill="url(#gVr)"/>
<path d="M26.500 2h.5l5 6.500v1.500l-3.500 1.500-2-2.500z" fill="#3c84e0"/><path d="M26.500 2h.5l5 6.500-2.500-.5z" fill="#68a8f0"/>
<path d="M32 9.500v1.500l-6 6h-3l5.500-6z" fill="#5cac34"/>
<rect x="22.800" y="16.800" width="9.500" height="10" fill="#fff" stroke="#7a5a3a" stroke-width="1.200"/>
<text x="27.600" y="25.600" text-anchor="middle" font-family="Liberation Sans" font-size="10.500" fill="#3a3a3a">9</text></svg><svg style="left:569px;top:4px" width="34" height="36" viewBox="0 0 34 36" ><defs><linearGradient id="gPen" x1="0" y1="0" x2="1" y2=".37"><stop offset="0" stop-color="#1c6cd0"/><stop offset=".4" stop-color="#58b4f8"/><stop offset=".7" stop-color="#2c8ce4"/><stop offset="1" stop-color="#1a5cb8"/></linearGradient></defs>
<path d="M10.500 31c-6.500 0-9.500-3-7.500-4.500 3-2 18-.2 25-1 4-.5 4-3 0-3.500-5-.5-9-2.500-5-3.500 3-.5 6-.2 8.500-.2" fill="none" stroke="#f8a818" stroke-width="2.400" opacity=".4" stroke-linecap="round"/>
<path d="M10.500 31c-6.500 0-9.500-3-7.500-4.500 3-2 18-.2 25-1 4-.5 4-3 0-3.500-5-.5-9-2.500-5-3.500 3-.5 6-.2 8.500-.2" fill="none" stroke="#fcc838" stroke-width="1" stroke-linecap="round"/>
<path d="M22.640 5.670l-4.680-1.740-8.050 21.500 4.680 1.740z" fill="url(#gPen)"/>
<path d="M9.910 25.430l4.680 1.740-4.090 3.830z" fill="#b4b8c0"/><path d="M10.300 29.200l1.300.5-1.100 1.300z" fill="#333"/>
<ellipse cx="21.100" cy="3.200" rx="2.600" ry="2.100" fill="#8a8e96" transform="rotate(20 21.100 3.200)"/><ellipse cx="21.500" cy="2.300" rx="1.500" ry="1.100" fill="#4a4e56" transform="rotate(20 21.500 2.300)"/>
<path d="M23.200 6.200l-3.800 10" stroke="#c4ccd8" stroke-width="1.100"/></svg><svg style="left:630px;top:3px" width="34" height="34" viewBox="0 0 34 34" ><path d="M1.500 27.500v-18q0-8 8-8h18.500v26z" fill="#5a68c8" stroke="#3c48a8" stroke-width=".8"/>
<path d="M3 26v-16.500q0-6.500 6.500-6.500h17v23z" fill="none" stroke="#e8ecff" stroke-width="1.200"/>
<path d="M4 25v-15q0-6 6-6h4v21z" fill="#98a4e8" opacity=".7"/>
<path d="M10.500 6l22 2.500-2.500 23-22-4.500z" fill="#f2f4fc" stroke="#c6cae4" stroke-width=".5"/>
<path d="M10.500 6l22 2.500-.5 4-22-3z" fill="#fff"/>
<path d="M13.500 9l6 .8-.8 5.500-6-.8z" fill="#4c5cc4"/>
<rect x="13.500" y="17" width="2" height="2" fill="#2c3ca8" transform="rotate(8 14 18)"/><rect x="12.800" y="21" width="2.200" height="2.200" fill="#2c3ca8" transform="rotate(8 14 22)"/><rect x="17.500" y="22" width="2.200" height="2" fill="#2c3ca8" transform="rotate(8 18 23)"/>
<path d="M24.500 19.500l4 4.500-4.500 4-4-4.500z" fill="#1c2c98"/></svg><div style="left:993px;top:4px;width:53px;height:20px;background:linear-gradient(100deg,#bcb8a4,#b2ae9a 50%,#a6a692);filter:blur(2.500px);opacity:.95"></div><div class="t" id="t20" style="left:1062.2px;top:12px;font-size:12px;color:#fff;transform-origin:0 0;transform:scaleX(0.8877);">EN</div><svg style="left:1093px;top:19px" width="9" height="5" viewBox="0 0 9 5" ><path d="M0 4.500l4.500-4.500 4.500 4.500z" fill="#fff"/></svg><svg style="left:1113px;top:13px" width="18" height="16" viewBox="0 0 18 16" ><path d="M1.500 1v14" stroke="#fff" stroke-width="1.300"/><path d="M2.500 2c3-1.500 5 1 7.500 0v6.500c-2.500 1-4.500-1.500-7.500 0z" fill="#fff"/><path d="M10.500 3.500c2 1 3.500.5 5.500-.5-1 2.500-2 4-5.500 5.500z" fill="#e4e8ea"/><path d="M.5 1v14.500M2.500 1" stroke="#1a2e32" stroke-width=".4"/></svg><svg style="left:1138px;top:13px" width="17" height="16" viewBox="0 0 17 16" ><rect x="5" y="3.500" width="10.500" height="8" fill="#1c3a40" stroke="#fff" stroke-width="1.300"/><path d="M7 14.500h7M10.500 11.500v3" stroke="#fff" stroke-width="1.300"/><path d="M1 4h5v3h-1.500v7h2.500" fill="none" stroke="#fff" stroke-width="1.300"/><path d="M2 1v3M4.500 1v3" stroke="#fff" stroke-width="1.100"/></svg><svg style="left:1161px;top:13px" width="17" height="15" viewBox="0 0 17 15" ><path d="M1 5h3l4.500-4v13l-4.500-4h-3z" fill="#fff" stroke="#d0d4d6" stroke-width=".5"/><path d="M10.500 4.500q2 3 0 6M12.500 2.500q3.500 5 0 10" fill="none" stroke="#fff" stroke-width="1.200"/></svg><div class="t" id="t21" style="left:1200px;top:7px;font-size:12px;color:#fff;transform-origin:0 0;transform:scaleX(0.9395);">7:27 PM</div><div class="t" id="t22" style="left:1194.6px;top:23.5px;font-size:12px;color:#fff;transform-origin:0 0;transform:scaleX(0.9777);">7/15/2009</div><div style="left:1257px;top:1px;width:24px;height:39px;border:1px solid #0c2226;border-right:none;background:linear-gradient(100deg,#3d6a70,#2a555c 50%,#38666c);box-shadow:inset 1px 1px 0 rgba(255,255,255,.35)"></div></div>
<svg style="left:232px;top:234px" width="14" height="22" viewBox="0 0 14 22" ><path d="M1.500 1.500v16.300l3.700-3.400 2.700 6 3-1.300-2.700-5.900h4.800z" fill="#fff" stroke="#0c0c22" stroke-width="1.100" stroke-linejoin="miter"/></svg>
</body></html>
